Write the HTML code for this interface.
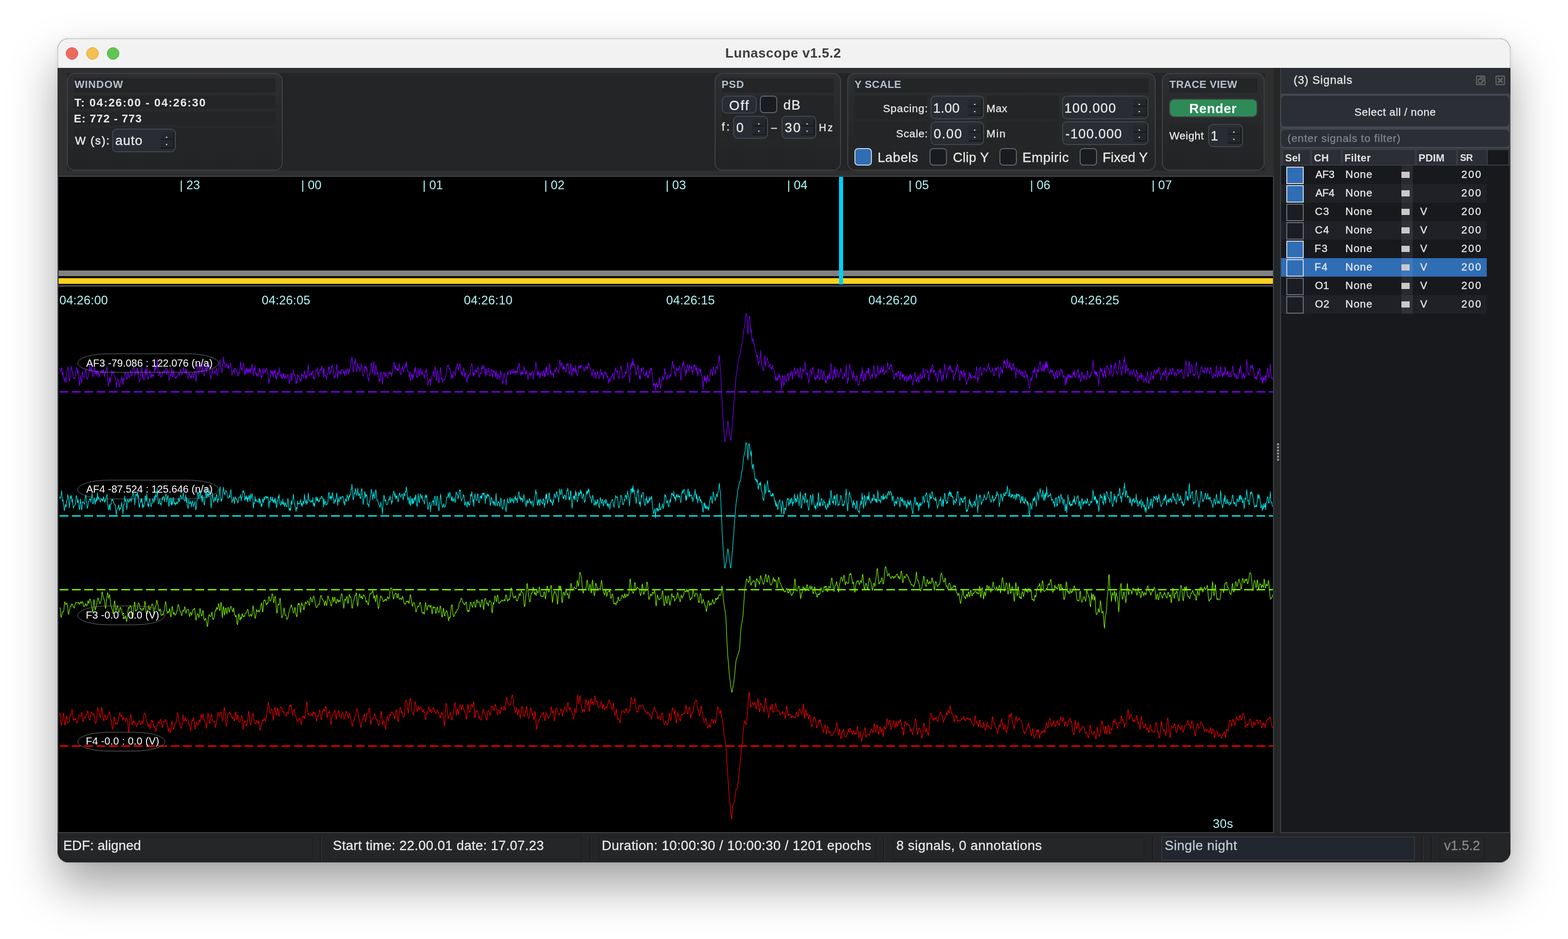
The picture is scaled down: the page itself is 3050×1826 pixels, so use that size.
<!DOCTYPE html>
<html lang="en"><head><meta charset="utf-8"><title>Lunascope v1.5.2</title>
<style>
*{box-sizing:border-box;margin:0;padding:0}
html,body{width:3050px;height:1826px;background:#fff}
body{font-family:"Liberation Sans",sans-serif;position:relative}
#win{position:absolute;left:112px;top:75px;width:2826px;height:1602px;border-radius:21px;overflow:hidden;background:#242527;z-index:2}
#shadow{position:absolute;left:112px;top:75px;width:2826px;height:1602px;border-radius:21px;z-index:1;
 box-shadow:0 45px 90px rgba(0,0,0,.37),0 0 6px rgba(0,0,0,.10)}
#ring{position:absolute;left:112px;top:75px;width:2826px;height:1602px;border-radius:21px;z-index:3;border:1px solid rgba(0,0,0,.22)}
#in{position:absolute;left:-112px;top:-75px;width:3050px;height:1826px;will-change:transform}
.a{position:absolute}
.t{position:absolute;white-space:pre;line-height:1em;-webkit-text-stroke:.3px}
.t.p{-webkit-text-stroke:0}
.gb{border:2px solid #3e4043;border-radius:15px;background:linear-gradient(#2d2e30,#222325)}
.sp{border:2px solid #40454d;border-radius:9px;background:#292c32}
.cb{border:2px solid #5b616b;border-radius:7px;background:#191b20}
.cb.on{background:#2f6db5;border-color:#c3cedd}
.sb{position:absolute;right:1px;top:5px;bottom:5px;width:27px}
.sb i{position:absolute;left:0;right:0;background:#24272c;border-right:2px solid #17181b;border-bottom:2px solid #17181b}
.sb i.u{top:0;height:47%}
.sb i.d{bottom:0;height:50%}
.sb b{position:absolute;left:10px;width:0;height:0;border-left:2.5px solid transparent;border-right:2.5px solid transparent}
.sb b.u{top:24%;border-bottom:3px solid #d8dade}
.sb b.d{bottom:20%;border-top:3px solid #d8dade}
.row{background:#1f2125}
</style></head>
<body>
<div id="shadow"></div>
<div id="win"><div id="in">
<div class="a" style="left:112px;top:75px;width:2826px;height:57px;background:#f2f2f2;"></div>
<div class="a" style="left:128px;top:92px;width:24px;height:24px;border-radius:50%;background:#ed6a5e;border:1px solid #d5544a"></div>
<div class="a" style="left:168px;top:92px;width:24px;height:24px;border-radius:50%;background:#f5bf4f;border:1px solid #d8a13a"></div>
<div class="a" style="left:208px;top:92px;width:24px;height:24px;border-radius:50%;background:#61c554;border:1px solid #4fa73f"></div>
<span class="t" style="left:1410.8px;top:90.4px;font-size:26px;color:#3c3c3c;font-weight:bold;-webkit-text-stroke:0;letter-spacing:0.55px;">Lunascope v1.5.2</span>
<div class="a" style="left:112px;top:132px;width:2366px;height:209px;background:#2f2f2f;"></div>
<div class="a" style="left:130px;top:142px;width:2330px;height:190px;background:#242527;"></div>
<div class="a gb" style="left:130px;top:142px;width:420px;height:190px;"></div>
<div class="a" style="left:144px;top:152px;width:392px;height:28px;background:#242527;"></div>
<span class="t" style="left:144.9px;top:154.0px;font-size:20.5px;color:#b5c0cc;font-weight:bold;-webkit-text-stroke:0;letter-spacing:0.84px;">WINDOW</span>
<div class="a" style="left:144px;top:186px;width:392px;height:25px;background:#242527;"></div>
<span class="t" style="left:144.7px;top:188.6px;font-size:22px;color:#e9e9e9;font-weight:bold;-webkit-text-stroke:0;letter-spacing:1.66px;">T: 04:26:00 - 04:26:30</span>
<div class="a" style="left:144px;top:217px;width:392px;height:26px;background:#242527;"></div>
<span class="t" style="left:143.4px;top:220.3px;font-size:22px;color:#e9e9e9;font-weight:bold;-webkit-text-stroke:0;letter-spacing:1.01px;">E: 772 - 773</span>
<div class="a" style="left:144px;top:249px;width:392px;height:47px;background:#242527;"></div>
<span class="t" style="left:145.9px;top:262.8px;font-size:22px;color:#e9e9e9;letter-spacing:1.66px;-webkit-text-stroke:0.5px #e9e9e9;">W (s):</span>
<div class="a sp" style="left:218px;top:250px;width:124px;height:46px"><div class="sb"><i class="u"></i><i class="d"></i><b class="u"></b><b class="d"></b></div></div>
<span class="t" style="left:223.9px;top:260.4px;font-size:26px;color:#e9e9e9;letter-spacing:0.84px;">auto</span>
<div class="a gb" style="left:1390px;top:142px;width:246px;height:190px;"></div>
<div class="a" style="left:1404px;top:152px;width:218px;height:28px;background:#242527;"></div>
<span class="t" style="left:1403.4px;top:154.0px;font-size:20.5px;color:#b5c0cc;font-weight:bold;-webkit-text-stroke:0;letter-spacing:0.80px;">PSD</span>
<div class="a" style="left:1404px;top:186px;width:218px;height:84px;background:#242527;"></div>
<div class="a sp" style="left:1404px;top:186px;width:68px;height:35px;"></div>
<span class="t" style="left:1418.2px;top:192.0px;font-size:26px;color:#e9e9e9;letter-spacing:2.00px;">Off</span>
<div class="a cb" style="left:1478px;top:186px;width:34px;height:34px;"></div>
<span class="t" style="left:1523.7px;top:191.0px;font-size:26px;color:#e9e9e9;letter-spacing:1.40px;">dB</span>
<span class="t" style="left:1403.8px;top:235.9px;font-size:22px;color:#e9e9e9;letter-spacing:3.00px;">f:</span>
<div class="a sp" style="left:1426px;top:224.5px;width:68px;height:45.5px"><div class="sb"><i class="u"></i><i class="d"></i><b class="u"></b><b class="d"></b></div></div>
<span class="t" style="left:1432.0px;top:235.0px;font-size:26px;color:#e9e9e9;">0</span>
<span class="t" style="left:1500.0px;top:237.6px;font-size:20px;color:#e9e9e9;">–</span>
<div class="a sp" style="left:1520px;top:224.5px;width:68px;height:45.5px"><div class="sb"><i class="u"></i><i class="d"></i><b class="u"></b><b class="d"></b></div></div>
<span class="t" style="left:1526.3px;top:235.0px;font-size:26px;color:#e9e9e9;letter-spacing:2.10px;">30</span>
<span class="t" style="left:1592.8px;top:237.6px;font-size:20px;color:#e9e9e9;letter-spacing:2.72px;">Hz</span>
<div class="a gb" style="left:1648px;top:142px;width:600px;height:190px;"></div>
<div class="a" style="left:1662px;top:152px;width:572px;height:28px;background:#242527;"></div>
<span class="t" style="left:1662.2px;top:154.0px;font-size:20.5px;color:#b5c0cc;font-weight:bold;-webkit-text-stroke:0;letter-spacing:0.39px;">Y SCALE</span>
<div class="a" style="left:1662px;top:186px;width:142px;height:46px;background:#242527;"></div>
<div class="a" style="left:1920px;top:186px;width:140px;height:46px;background:#242527;"></div>
<div class="a" style="left:1662px;top:236px;width:142px;height:46px;background:#242527;"></div>
<div class="a" style="left:1920px;top:236px;width:140px;height:46px;background:#242527;"></div>
<span class="t" style="left:1717.4px;top:199.7px;font-size:21px;color:#e9e9e9;letter-spacing:0.79px;">Spacing:</span>
<div class="a sp" style="left:1810px;top:186px;width:104px;height:46px"><div class="sb"><i class="u"></i><i class="d"></i><b class="u"></b><b class="d"></b></div></div>
<span class="t" style="left:1815.0px;top:197.0px;font-size:26px;color:#e9e9e9;letter-spacing:0.26px;">1.00</span>
<span class="t" style="left:1918.8px;top:199.7px;font-size:21px;color:#e9e9e9;letter-spacing:0.39px;">Max</span>
<div class="a sp" style="left:2066px;top:186px;width:168px;height:46px"><div class="sb"><i class="u"></i><i class="d"></i><b class="u"></b><b class="d"></b></div></div>
<span class="t" style="left:2070.3px;top:197.0px;font-size:26px;color:#e9e9e9;letter-spacing:1.02px;">100.000</span>
<span class="t" style="left:1743.0px;top:249.4px;font-size:21px;color:#e9e9e9;letter-spacing:0.66px;">Scale:</span>
<div class="a sp" style="left:1810px;top:236px;width:104px;height:46px"><div class="sb"><i class="u"></i><i class="d"></i><b class="u"></b><b class="d"></b></div></div>
<span class="t" style="left:1816.0px;top:247.2px;font-size:26px;color:#e9e9e9;letter-spacing:1.46px;">0.00</span>
<span class="t" style="left:1918.8px;top:249.4px;font-size:21px;color:#e9e9e9;letter-spacing:1.53px;">Min</span>
<div class="a sp" style="left:2066px;top:236px;width:168px;height:46px"><div class="sb"><i class="u"></i><i class="d"></i><b class="u"></b><b class="d"></b></div></div>
<span class="t" style="left:2072.3px;top:247.2px;font-size:26px;color:#e9e9e9;letter-spacing:1.00px;">-100.000</span>
<div class="a" style="left:1662px;top:288px;width:128px;height:34px;background:#242527;"></div>
<div class="a" style="left:1808px;top:288px;width:120px;height:34px;background:#242527;"></div>
<div class="a" style="left:1944px;top:288px;width:140px;height:34px;background:#242527;"></div>
<div class="a" style="left:2100px;top:288px;width:134px;height:34px;background:#242527;"></div>
<div class="a cb on" style="left:1662px;top:288px;width:34px;height:34px;"></div>
<span class="t" style="left:1706.9px;top:293.1px;font-size:26px;color:#e9e9e9;letter-spacing:0.47px;">Labels</span>
<div class="a cb" style="left:1808px;top:288px;width:34px;height:34px;"></div>
<span class="t" style="left:1853.5px;top:293.1px;font-size:26px;color:#e9e9e9;letter-spacing:0.26px;">Clip Y</span>
<div class="a cb" style="left:1944px;top:288px;width:34px;height:34px;"></div>
<span class="t" style="left:1988.7px;top:293.1px;font-size:26px;color:#e9e9e9;letter-spacing:0.60px;">Empiric</span>
<div class="a cb" style="left:2100px;top:288px;width:34px;height:34px;"></div>
<span class="t" style="left:2144.7px;top:293.1px;font-size:26px;color:#e9e9e9;letter-spacing:0.03px;">Fixed Y</span>
<div class="a gb" style="left:2260px;top:142px;width:200px;height:190px;"></div>
<div class="a" style="left:2274px;top:152px;width:172px;height:28px;background:#242527;"></div>
<span class="t" style="left:2274.8px;top:154.0px;font-size:20.5px;color:#b5c0cc;font-weight:bold;-webkit-text-stroke:0;letter-spacing:0.32px;">TRACE VIEW</span>
<div class="a" style="left:2274px;top:192px;width:172px;height:36px;background:#2e8b57;border:2px solid #3f4a4a;border-radius:10px;"></div>
<span class="t" style="left:2313.2px;top:197.5px;font-size:26px;color:#ffffff;font-weight:bold;-webkit-text-stroke:0;letter-spacing:0.50px;">Render</span>
<div class="a" style="left:2274px;top:240px;width:172px;height:46px;background:#242527;"></div>
<span class="t" style="left:2274.4px;top:252.8px;font-size:21px;color:#e9e9e9;letter-spacing:0.41px;">Weight</span>
<div class="a sp" style="left:2350px;top:240.5px;width:68px;height:45.5px"><div class="sb"><i class="u"></i><i class="d"></i><b class="u"></b><b class="d"></b></div></div>
<span class="t" style="left:2355.0px;top:251.3px;font-size:26px;color:#e9e9e9;">1</span>
<div class="a" style="left:112px;top:339.5px;width:2366px;height:1.7px;background:#232426;"></div>
<div class="a" style="left:112px;top:341.2px;width:2366px;height:2.8px;background:#3a3e45;"></div>
<div class="a" style="left:112px;top:344px;width:2px;height:1276px;background:#3a3e45;"></div>
<div class="a" style="left:2476px;top:344px;width:2px;height:1276px;background:#3a3e45;"></div>
<div class="a" style="left:114px;top:344px;width:2362px;height:210px;background:#000;"></div>
<span class="t p" style="left:349.5px;top:348.4px;font-size:24px;color:#aef6f6;">| 23</span>
<span class="t p" style="left:585.8px;top:348.4px;font-size:24px;color:#aef6f6;">| 00</span>
<span class="t p" style="left:822.1px;top:348.4px;font-size:24px;color:#aef6f6;">| 01</span>
<span class="t p" style="left:1058.4px;top:348.4px;font-size:24px;color:#aef6f6;">| 02</span>
<span class="t p" style="left:1294.7px;top:348.4px;font-size:24px;color:#aef6f6;">| 03</span>
<span class="t p" style="left:1531.0px;top:348.4px;font-size:24px;color:#aef6f6;">| 04</span>
<span class="t p" style="left:1767.3px;top:348.4px;font-size:24px;color:#aef6f6;">| 05</span>
<span class="t p" style="left:2003.6px;top:348.4px;font-size:24px;color:#aef6f6;">| 06</span>
<span class="t p" style="left:2239.9px;top:348.4px;font-size:24px;color:#aef6f6;">| 07</span>
<div class="a" style="left:114px;top:526px;width:2362px;height:11px;background:#808080;"></div>
<div class="a" style="left:114px;top:541px;width:2362px;height:11px;background:#ffd01e;"></div>
<div class="a" style="left:1632px;top:344px;width:8px;height:209px;background:#00d0f5;"></div>
<div class="a" style="left:114px;top:554px;width:2362px;height:4px;background:#3a3e45;"></div>
<div class="a" style="left:114px;top:558px;width:2362px;height:1059.5px;background:#000;"></div>
<div class="a" style="left:112px;top:1617.5px;width:2826px;height:2.5px;background:#3a3e45;"></div>
<span class="t p" style="left:115.5px;top:572.1px;font-size:24px;color:#aef6f6;letter-spacing:0.15px;">04:26:00</span>
<span class="t p" style="left:508.9px;top:572.1px;font-size:24px;color:#aef6f6;letter-spacing:0.17px;">04:26:05</span>
<span class="t p" style="left:902.3px;top:572.1px;font-size:24px;color:#aef6f6;letter-spacing:0.15px;">04:26:10</span>
<span class="t p" style="left:1295.7px;top:572.1px;font-size:24px;color:#aef6f6;letter-spacing:0.17px;">04:26:15</span>
<span class="t p" style="left:1689.1px;top:572.1px;font-size:24px;color:#aef6f6;letter-spacing:0.15px;">04:26:20</span>
<span class="t p" style="left:2082.5px;top:572.1px;font-size:24px;color:#aef6f6;letter-spacing:0.17px;">04:26:25</span>
<span class="t p" style="left:2358.9px;top:1589.5px;font-size:24px;color:#aef6f6;letter-spacing:0.45px;">30s</span>
<svg class="a" style="left:0;top:0" width="3050" height="1826" viewBox="0 0 3050 1826"><path transform="translate(116,0) scale(0.75,0.5)" d="M0,1432 l1,3 1,8 1,1 1,-5 1,-10 1,8 1,22 1,-3 1,-10 1,21 1,5 1,14 1,-12 1,-2 1,-4 1,19 1,1 1,-33 1,-13 1,1 1,-13 1,-3 1,3 1,26 1,26 1,-1 1,-10 1,-33 1,0 1,-14 1,5 1,19 1,-4 1,14 1,8 1,6 1,-3 1,4 1,0 1,-5 1,-12 1,-11 1,-13 1,-3 1,4 1,16 1,3 1,-16 1,18 1,25 1,21 1,-5 1,-22 1,-13 1,14 1,2 1,14 1,-13 1,-34 1,10 1,7 1,6 1,2 1,-3 1,-1 1,-17 1,-3 1,-9 1,14 1,12 1,14 1,0 1,-5 1,-2 1,-7 1,-15 1,-16 1,-10 1,20 1,5 1,-5 1,-15 1,17 1,-5 1,13 1,16 1,-3 1,-5 1,-19 1,-12 1,7 1,25 1,-8 1,-10 1,12 1,-10 1,20 1,-22 1,10 1,4 1,-6 1,18 1,-3 1,-12 1,-1 1,0 1,-8 1,-4 1,2 1,11 1,-10 1,10 1,-12 1,-3 1,16 1,13 1,-7 1,-14 1,6 1,-10 1,0 1,-3 1,-14 1,33 1,19 1,25 1,0 1,-16 1,-18 1,14 1,8 1,-18 1,4 1,-16 1,-19 1,9 1,5 1,-2 1,-4 1,-4 1,8 1,10 1,7 1,-2 1,1 1,20 1,20 1,-14 1,-8 1,-10 1,-3 1,7 1,2 1,11 1,12 1,-3 1,-14 1,-3 1,-3 1,-10 1,-8 1,18 1,-8 1,22 1,-8 1,-18 1,9 1,-12 1,-17 1,5 1,-4 1,-2 1,16 1,9 1,1 1,-16 1,-11 1,10 1,2 1,11 1,-9 1,1 1,0 1,-19 1,-5 1,15 1,9 1,-2 1,-11 1,-18 1,-4 1,-2 1,12 1,-3 1,28 1,-8 1,-10 1,5 1,0 1,3 1,-19 1,-3 1,26 1,-16 1,30 1,10 1,6 1,-10 1,-5 1,-10 1,-18 1,2 1,-17 1,13 1,28 1,-17 1,13 1,12 1,-2 1,0 1,-21 1,-20 1,4 1,20 1,-4 1,-29 1,24 1,10 1,15 1,-3 1,0 1,-18 1,-5 1,-8 1,6 1,18 1,5 1,-12 1,-5 1,13 1,-8 1,-1 1,5 1,3 1,-11 1,-28 1,16 1,-7 1,-10 1,9 1,-1 1,-7 1,-30 1,23 1,26 1,15 1,3 1,-1 1,-8 1,-15 1,16 1,6 1,7 1,-7 1,2 1,-17 1,8 1,-2 1,-3 1,-7 1,-2 1,10 1,-2 1,-6 1,-8 1,-2 1,3 1,22 1,-8 1,-4 1,-8 1,9 1,24 1,10 1,-8 1,-5 1,-14 1,9 1,-3 1,0 1,-30 1,30 1,8 1,0 1,-25 1,-3 1,21 1,1 1,5 1,5 1,-4 1,6 1,-6 1,-5 1,3 1,-8 1,-2 1,-4 1,1 1,11 1,-7 1,-6 1,-11 1,-3 1,6 1,12 1,5 1,-7 1,-10 1,0 1,-15 1,14 1,4 1,5 1,1 1,-9 1,-8 1,14 1,6 1,-18 1,28 1,2 1,8 1,-9 1,-17 1,10 1,-2 1,0 1,14 1,-7 1,-2 1,12 1,-17 1,-2 1,-3 1,7 1,12 1,-5 1,-10 1,-3 1,-9 1,11 1,24 1,5 1,-22 1,-22 1,-6 1,-17 1,14 1,0 1,28 1,-12 1,-14 1,-12 1,-13 1,25 1,13 1,-4 1,10 1,-7 1,-24 1,15 1,15 1,8 1,4 1,-4 1,-26 1,2 1,2 1,-9 1,21 1,-10 1,-14 1,10 1,-10 1,7 1,-15 1,9 1,-2 1,28 1,11 1,10 1,2 1,-15 1,-13 1,-12 1,17 1,-1 1,1 1,4 1,-7 1,-2 1,-2 1,9 1,-6 1,-16 1,6 1,13 1,7 1,4 1,-14 1,-9 1,-8 1,-16 1,-4 1,-11 1,26 1,-2 1,11 1,-2 1,19 1,-12 1,-20 1,-12 1,-19 1,18 1,9 1,-6 1,19 1,-2 1,-6 1,1 1,-8 1,6 1,8 1,5 1,-9 1,-3 1,15 1,-9 1,0 1,-2 1,-13 1,8 1,11 1,14 1,16 1,-4 1,-11 1,1 1,-9 1,9 1,7 1,-18 1,-4 1,4 1,9 1,-2 1,-3 1,10 1,-1 1,14 1,0 1,-14 1,2 1,3 1,-11 1,-16 1,-19 1,12 1,19 1,-8 1,10 1,-9 1,-12 1,-1 1,-8 1,22 1,3 1,24 1,-4 1,-21 1,15 1,4 1,-22 1,12 1,-6 1,16 1,-16 1,11 1,-12 1,0 1,13 1,3 1,-20 1,13 1,-7 1,-17 1,-4 1,16 1,9 1,21 1,-9 1,-21 1,8 1,-6 1,-13 1,31 1,-3 1,0 1,14 1,-10 1,-1 1,12 1,-7 1,-9 1,-14 1,-3 1,16 1,-12 1,17 1,6 1,14 1,-12 1,5 1,-27 1,-5 1,0 1,22 1,-11 1,3 1,-12 1,2 1,9 1,-7 1,-2 1,-7 1,6 1,7 1,8 1,6 1,13 1,22 1,-22 1,-1 1,-2 1,-30 1,8 1,5 1,-5 1,9 1,-15 1,19 1,7 1,-17 1,-5 1,9 1,-14 1,-1 1,32 1,-10 1,16 1,-3 1,-14 1,-7 1,6 1,-10 1,7 1,-25 1,10 1,6 1,13 1,3 1,4 1,-12 1,18 1,-1 1,0 1,-17 1,14 1,-13 1,-3 1,16 1,4 1,-10 1,-2 1,10 1,0 1,-2 1,1 1,-12 1,-1 1,5 1,10 1,20 1,0 1,-13 1,2 1,0 1,-28 1,2 1,27 1,-9 1,-20 1,-3 1,-11 1,10 1,11 1,-2 1,1 1,10 1,8 1,17 1,-12 1,2 1,7 1,-35 1,6 1,3 1,1 1,-3 1,11 1,5 1,3 1,-6 1,8 1,-5 1,-26 1,11 1,-5 1,0 1,3 1,9 1,-13 1,-16 1,12 1,4 1,17 1,-1 1,-15 1,13 1,-9 1,-8 1,-28 1,-7 1,29 1,15 1,-5 1,-3 1,1 1,2 1,-12 1,9 1,3 1,-7 1,-5 1,-5 1,32 1,-8 1,7 1,3 1,-10 1,-6 1,-9 1,-11 1,2 1,0 1,-12 1,23 1,-5 1,12 1,7 1,-17 1,-1 1,-10 1,-2 1,-3 1,8 1,-6 1,-12 1,11 1,-1 1,1 1,35 1,-29 1,-8 1,24 1,8 1,-6 1,5 1,3 1,12 1,-14 1,-11 1,2 1,-3 1,-25 1,7 1,-7 1,28 1,-1 1,-7 1,-5 1,5 1,-22 1,5 1,-11 1,6 1,3 1,13 1,20 1,9 1,0 1,-9 1,6 1,-16 1,-8 1,-22 1,-4 1,28 1,26 1,-15 1,-14 1,8 1,2 1,1 1,-11 1,4 1,11 1,-6 1,-15 1,0 1,2 1,0 1,5 1,-2 1,11 1,-7 1,12 1,5 1,-18 1,-5 1,10 1,9 1,-18 1,-6 1,5 1,2 1,15 1,-11 1,-7 1,8 1,-15 1,-2 1,-3 1,-26 1,0 1,-13 1,15 1,15 1,29 1,2 1,-14 1,-17 1,-9 1,6 1,-20 1,14 1,18 1,20 1,-6 1,-3 1,-25 1,12 1,7 1,1 1,-4 1,5 1,13 1,-10 1,-1 1,-22 1,11 1,0 1,19 1,16 1,5 1,-5 1,-5 1,-4 1,-21 1,-6 1,12 1,-10 1,2 1,13 1,-10 1,39 1,2 1,1 1,0 1,12 1,-22 1,-9 1,4 1,-20 1,-7 1,-20 1,6 1,12 1,4 1,22 1,-22 1,-4 1,-23 1,30 1,16 1,9 1,-18 1,-22 1,1 1,19 1,18 1,-8 1,-3 1,9 1,17 1,6 1,-4 1,11 1,-10 1,-15 1,-15 1,11 1,13 1,5 1,21 1,-14 1,-25 1,-2 1,-9 1,2 1,11 1,8 1,-16 1,-2 1,13 1,-2 1,8 1,1 1,0 1,-12 1,-5 1,-4 1,6 1,-5 1,-5 1,11 1,-2 1,-3 1,15 1,-13 1,0 1,-19 1,-3 1,-16 1,-1 1,-4 1,29 1,-15 1,-1 1,12 1,-1 1,6 1,-8 1,9 1,-6 1,8 1,-5 1,-19 1,-4 1,15 1,25 1,3 1,1 1,-13 1,-11 1,2 1,-7 1,-5 1,19 1,2 1,-10 1,0 1,-6 1,-10 1,-3 1,12 1,-21 1,6 1,12 1,17 1,3 1,-2 1,3 1,14 1,8 1,-11 1,-12 1,37 1,-9 1,-5 1,-13 1,3 1,20 1,-21 1,10 1,-3 1,-8 1,-7 1,-15 1,13 1,-20 1,7 1,18 1,16 1,-5 1,5 1,-19 1,-16 1,15 1,10 1,3 1,-19 1,-9 1,4 1,12 1,7 1,-4 1,-15 1,18 1,2 1,-1 1,-1 1,6 1,12 1,-14 1,-10 1,-6 1,7 1,-10 1,-6 1,30 1,13 1,23 1,-11 1,-6 1,-7 1,-1 1,6 1,-9 1,27 1,-19 1,-1 1,-6 1,-11 1,-4 1,-7 1,-5 1,0 1,21 1,-29 1,-2 1,-11 1,13 1,28 1,15 1,-18 1,-19 1,-2 1,3 1,22 1,21 1,1 1,-20 1,-15 1,-16 1,-9 1,26 1,18 1,2 1,-5 1,18 1,-8 1,-2 1,-3 1,4 1,0 1,-4 1,-7 1,-5 1,-2 1,-14 1,-16 1,-5 1,-5 1,3 1,-6 1,11 1,5 1,1 1,-4 1,5 1,10 1,13 1,16 1,-7 1,-15 1,17 1,-5 1,-6 1,-8 1,-9 1,6 1,5 1,8 1,-7 1,-25 1,6 1,-11 1,-6 1,-5 1,22 1,4 1,-3 1,-8 1,-12 1,5 1,-5 1,11 1,25 1,1 1,-8 1,16 1,1 1,-13 1,-17 1,0 1,-2 1,38 1,-6 1,-13 1,2 1,10 1,18 1,4 1,4 1,-23 1,8 1,-14 1,3 1,0 1,-5 1,2 1,-9 1,-23 1,-2 1,-3 1,-8 1,11 1,8 1,28 1,-12 1,17 1,-15 1,6 1,-19 1,2 1,7 1,-4 1,-1 1,8 1,-10 1,-6 1,-8 1,14 1,16 1,11 1,2 1,-12 1,-6 1,3 1,0 1,-22 1,5 1,-17 1,14 1,1 1,-2 1,-11 1,4 1,20 1,4 1,16 1,-29 1,-3 1,15 1,10 1,-15 1,-1 1,-5 1,-6 1,15 1,-3 1,15 1,4 1,1 1,-8 1,-17 1,0 1,-2 1,24 1,7 1,-11 1,-15 1,6 1,-6 1,7 1,1 1,17 1,-7 1,-19 1,17 1,17 1,0 1,-21 1,3 1,5 1,5 1,-4 1,3 1,12 1,-18 1,-18 1,6 1,8 1,9 1,15 1,14 1,-1 1,-12 1,-24 1,-4 1,5 1,13 1,2 1,14 1,11 1,-12 1,-23 1,-6 1,-9 1,13 1,-12 1,-3 1,0 1,-1 1,-1 1,15 1,-7 1,-12 1,3 1,8 1,3 1,-6 1,-12 1,15 1,1 1,-4 1,-6 1,7 1,-5 1,15 1,-16 1,4 1,0 1,6 1,-25 1,7 1,-8 1,-11 1,-3 1,27 1,0 1,10 1,12 1,-15 1,6 1,4 1,-13 1,11 1,1 1,-17 1,-14 1,11 1,-2 1,15 1,9 1,-8 1,5 1,-14 1,16 1,0 1,16 1,4 1,-12 1,-8 1,-3 1,-3 1,12 1,-5 1,-7 1,11 1,-12 1,-2 1,-3 1,8 1,24 1,-4 1,-18 1,-12 1,0 1,-4 1,-9 1,-22 1,13 1,1 1,26 1,11 1,1 1,-16 1,16 1,-10 1,0 1,20 1,0 1,-17 1,7 1,-10 1,-2 1,1 1,13 1,1 1,-22 1,3 1,4 1,18 1,-14 1,14 1,-15 1,-21 1,21 1,-24 1,6 1,21 1,7 1,-2 1,-3 1,-25 1,-16 1,9 1,24 1,7 1,-13 1,12 1,6 1,-6 1,2 1,1 1,-7 1,20 1,-13 1,-10 1,-8 1,5 1,3 1,-5 1,-14 1,7 1,3 1,3 1,0 1,3 1,9 1,-11 1,-12 1,-29 1,6 1,10 1,11 1,-7 1,-11 1,8 1,5 1,16 1,-2 1,-14 1,15 1,-10 1,6 1,6 1,2 1,8 1,-18 1,-14 1,0 1,5 1,-11 1,3 1,19 1,18 1,-5 1,12 1,-16 1,-24 1,-4 1,32 1,12 1,5 1,-22 1,-7 1,12 1,-17 1,10 1,0 1,6 1,-6 1,-19 1,28 1,-10 1,18 1,2 1,4 1,-10 1,-15 1,-15 1,11 1,-7 1,-1 1,10 1,-14 1,6 1,-7 1,4 1,2 1,1 1,1 1,3 1,1 1,12 1,0 1,-11 1,2 1,-8 1,-2 1,7 1,-3 1,10 1,-17 1,9 1,-20 1,6 1,-3 1,12 1,3 1,7 1,-1 1,8 1,1 1,17 1,3 1,-15 1,-12 1,0 1,12 1,21 1,-12 1,-1 1,-10 1,12 1,14 1,-10 1,-8 1,-1 1,-10 1,5 1,9 1,12 1,1 1,2 1,-19 1,-17 1,1 1,6 1,12 1,4 1,-13 1,8 1,3 1,16 1,-6 1,-18 1,-2 1,-1 1,4 1,7 1,-10 1,6 1,0 1,14 1,-6 1,8 1,22 1,-8 1,-7 1,-6 1,15 1,-6 1,-8 1,-7 1,1 1,-1 1,0 1,-11 1,-3 1,7 1,14 1,7 1,-30 1,-7 1,-3 1,-9 1,14 1,4 1,-1 1,-8 1,6 1,12 1,8 1,3 1,6 1,-9 1,-14 1,-8 1,-20 1,1 1,10 1,12 1,8 1,19 1,-4 1,-3 1,-3 1,-1 1,-1 1,3 1,-20 1,10 1,-9 1,5 1,-8 1,-20 1,-12 1,9 1,12 1,19 1,18 1,20 1,-11 1,-25 1,-31 1,9 1,-18 1,11 1,-15 1,12 1,-27 1,19 1,11 1,-8 1,5 1,7 1,15 1,3 1,15 1,-5 1,-11 1,-11 1,2 1,-15 1,5 1,11 1,28 1,9 1,-13 1,16 1,-26 1,-13 1,-6 1,14 1,-8 1,-2 1,-3 1,-3 1,20 1,15 1,-6 1,2 1,0 1,-10 1,11 1,-21 1,9 1,19 1,-6 1,-1 1,9 1,-9 1,-21 1,11 1,-1 1,-7 1,-11 1,8 1,-8 1,12 1,19 1,3 1,17 1,19 1,-10 1,2 1,4 1,-7 1,28 1,-24 1,3 1,-10 1,4 1,15 1,-12 1,9 1,-7 1,-2 1,-24 1,-3 1,26 1,3 1,15 1,-13 1,-9 1,-8 1,-11 1,-8 1,12 1,-4 1,6 1,-14 1,-29 1,-1 1,22 1,-8 1,14 1,7 1,8 1,-10 1,-7 1,1 1,8 1,3 1,-3 1,0 1,-12 1,9 1,-6 1,-5 1,-24 1,-4 1,-18 1,-3 1,12 1,15 1,-13 1,27 1,7 1,-3 1,8 1,7 1,-24 1,-10 1,9 1,1 1,-3 1,-5 1,7 1,-6 1,-10 1,1 1,0 1,41 1,12 1,-1 1,-29 1,-18 1,-5 1,-13 1,10 1,-18 1,8 1,7 1,7 1,13 1,11 1,13 1,-26 1,12 1,-16 1,-16 1,10 1,0 1,11 1,7 1,-25 1,8 1,1 1,-1 1,7 1,-7 1,-2 1,18 1,-5 1,18 1,-14 1,-18 1,-4 1,-3 1,10 1,-8 1,17 1,-1 1,4 1,-15 1,25 1,-9 1,22 1,-9 1,-11 1,-9 1,0 1,4 1,12 1,-11 1,-2 1,20 1,1 1,8 1,4 1,31 1,13 1,-29 1,-17 1,-8 1,22 1,-13 1,11 1,-5 1,-7 1,23 1,-8 1,-12 1,-12 1,17 1,3 1,6 1,-8 1,-13 1,-12 1,4 1,-20 1,2 1,2 1,10 1,13 1,-16 1,-21 1,1 1,8 1,6 1,1 1,15 1,-9 1,-11 1,-12 1,4 1,1 1,5 1,-17 1,-3 1,-11 1,-11 1,-12 1,26 1,16 1,13 1,30 1,39 1,28 1,28 1,36 1,26 1,19 1,21 1,17 1,21 1,17 1,-2 1,-10 1,-11 1,-6 1,-11 1,-13 1,-13 1,-15 1,7 1,14 1,16 1,11 1,4 1,12 1,12 1,-3 1,-12 1,-17 1,-22 1,-18 1,-19 1,-20 1,-18 1,-21 1,-22 1,-16 1,-15 1,-23 1,-17 1,-13 1,-11 1,-8 1,-12 1,-12 1,-7 1,-7 1,-9 1,-9 1,-1 1,-1 1,-8 1,-11 1,-11 1,-12 1,-3 1,-7 1,-10 1,-17 1,-16 1,-7 1,-3 1,-11 1,-15 1,-21 1,-6 1,-3 1,4 1,15 1,46 1,16 1,-27 1,-31 1,-11 1,-2 1,7 1,22 1,6 1,30 1,-11 1,38 1,5 1,2 1,-13 1,10 1,10 1,-1 1,15 1,3 1,8 1,9 1,3 1,3 1,14 1,-8 1,1 1,23 1,15 1,-12 1,-1 1,3 1,-18 1,-4 1,-25 1,16 1,33 1,10 1,5 1,4 1,5 1,2 1,5 1,-18 1,-33 1,-8 1,23 1,18 1,-15 1,-2 1,-9 1,-1 1,-6 1,11 1,21 1,0 1,-2 1,2 1,-10 1,13 1,4 1,3 1,-5 1,8 1,-15 1,4 1,-3 1,13 1,-1 1,4 1,14 1,4 1,0 1,24 1,-16 1,12 1,2 1,-12 1,13 1,-3 1,-10 1,-14 1,17 1,-4 1,-6 1,6 1,8 1,8 1,35 1,-22 1,-34 1,3 1,-3 1,20 1,21 1,-8 1,-33 1,1 1,3 1,16 1,4 1,0 1,-11 1,-16 1,-4 1,3 1,-4 1,28 1,-16 1,-2 1,-8 1,-7 1,12 1,-1 1,-11 1,-6 1,9 1,26 1,-21 1,-9 1,-6 1,-5 1,-6 1,9 1,19 1,-13 1,3 1,4 1,2 1,-3 1,-19 1,11 1,6 1,16 1,4 1,-23 1,-11 1,-7 1,13 1,25 1,4 1,3 1,-22 1,-11 1,-4 1,10 1,-7 1,0 1,3 1,-35 1,14 1,1 1,28 1,6 1,3 1,-5 1,-6 1,26 1,5 1,11 1,-11 1,-3 1,-21 1,-17 1,2 1,4 1,0 1,19 1,-23 1,-12 1,3 1,5 1,11 1,10 1,14 1,3 1,-5 1,11 1,-12 1,1 1,1 1,-11 1,12 1,-34 1,-2 1,11 1,26 1,6 1,-9 1,4 1,-28 1,-8 1,3 1,1 1,19 1,18 1,-6 1,-15 1,-17 1,16 1,5 1,3 1,22 1,-6 1,11 1,-7 1,-3 1,-14 1,-8 1,17 1,-9 1,-6 1,-12 1,26 1,-2 1,-22 1,-30 1,-8 1,30 1,13 1,16 1,7 1,-13 1,2 1,-31 1,17 1,-8 1,-20 1,27 1,19 1,-10 1,-24 1,-1 1,6 1,1 1,19 1,0 1,1 1,3 1,-16 1,-5 1,-7 1,-7 1,13 1,6 1,1 1,13 1,8 1,0 1,-5 1,-3 1,-15 1,9 1,8 1,-16 1,-13 1,-20 1,28 1,24 1,20 1,1 1,-22 1,8 1,-38 1,-6 1,-18 1,14 1,7 1,0 1,8 1,7 1,0 1,12 1,12 1,-23 1,-10 1,26 1,-5 1,0 1,4 1,4 1,11 1,-6 1,-15 1,1 1,11 1,15 1,11 1,1 1,-5 1,1 1,-16 1,-11 1,2 1,-20 1,10 1,8 1,-40 1,23 1,-9 1,27 1,15 1,-5 1,-24 1,-4 1,6 1,21 1,-13 1,-18 1,-7 1,4 1,8 1,-1 1,-21 1,20 1,-19 1,28 1,3 1,11 1,-7 1,-2 1,-1 1,-5 1,-3 1,14 1,-17 1,-3 1,-26 1,-2 1,23 1,11 1,-5 1,11 1,11 1,-17 1,5 1,1 1,-24 1,-17 1,12 1,22 1,3 1,-8 1,-6 1,-5 1,13 1,-6 1,-22 1,12 1,2 1,10 1,-6 1,-19 1,29 1,-1 1,6 1,-9 1,-2 1,-1 1,-3 1,6 1,-3 1,-6 1,-30 1,6 1,9 1,10 1,1 1,4 1,-16 1,-3 1,2 1,-3 1,6 1,-6 1,25 1,-1 1,-3 1,16 1,19 1,-1 1,-6 1,-1 1,-15 1,6 1,-3 1,-6 1,19 1,-14 1,-2 1,-7 1,6 1,-8 1,5 1,4 1,20 1,6 1,-27 1,-8 1,18 1,-2 1,9 1,-16 1,16 1,-9 1,-2 1,13 1,12 1,-18 1,2 1,6 1,0 1,-11 1,25 1,-5 1,-5 1,-9 1,10 1,-2 1,-15 1,10 1,3 1,-17 1,1 1,16 1,-12 1,7 1,10 1,12 1,8 1,-12 1,-9 1,-17 1,-1 1,-11 1,5 1,19 1,10 1,3 1,-12 1,7 1,-11 1,1 1,-10 1,28 1,-2 1,-21 1,-2 1,-11 1,19 1,3 1,-1 1,-10 1,7 1,-1 1,-27 1,-10 1,18 1,4 1,15 1,-8 1,-22 1,-2 1,0 1,2 1,1 1,4 1,5 1,-6 1,19 1,19 1,-7 1,-13 1,-23 1,8 1,3 1,-15 1,12 1,-21 1,-4 1,-4 1,11 1,18 1,4 1,-11 1,1 1,6 1,18 1,-10 1,3 1,-6 1,20 1,6 1,10 1,-18 1,-4 1,-8 1,-19 1,2 1,8 1,3 1,-16 1,22 1,7 1,20 1,-7 1,-19 1,1 1,16 1,-21 1,-18 1,-20 1,7 1,18 1,7 1,0 1,24 1,-5 1,-13 1,1 1,-24 1,-1 1,0 1,10 1,-18 1,10 1,-9 1,17 1,-9 1,15 1,-1 1,-4 1,4 1,-5 1,33 1,6 1,-21 1,0 1,-1 1,-5 1,-8 1,-15 1,15 1,-15 1,-13 1,9 1,-2 1,21 1,5 1,6 1,25 1,0 1,-23 1,-18 1,9 1,6 1,-10 1,15 1,2 1,7 1,-11 1,-17 1,14 1,11 1,-12 1,-1 1,29 1,6 1,10 1,-11 1,-6 1,0 1,-6 1,-7 1,3 1,-22 1,-1 1,21 1,-13 1,16 1,-7 1,8 1,-1 1,0 1,-5 1,-1 1,3 1,-1 1,-6 1,0 1,11 1,0 1,-22 1,-13 1,-12 1,15 1,5 1,46 1,-21 1,3 1,-6 1,-32 1,3 1,-8 1,-2 1,-1 1,26 1,7 1,-7 1,2 1,-5 1,-8 1,-7 1,-4 1,-1 1,9 1,-3 1,1 1,-1 1,7 1,0 1,1 1,-17 1,0 1,1 1,-16 1,12 1,12 1,-5 1,8 1,1 1,6 1,0 1,-1 1,-3 1,-11 1,9 1,3 1,18 1,-3 1,2 1,-5 1,-15 1,-9 1,8 1,-10 1,13 1,-7 1,0 1,-6 1,-3 1,3 1,23 1,21 1,-17 1,-2 1,-12 1,-17 1,8 1,13 1,-6 1,14 1,-16 1,-6 1,-16 1,-16 1,12 1,-9 1,14 1,-7 1,9 1,9 1,5 1,-22 1,-17 1,16 1,13 1,6 1,-2 1,3 1,-24 1,22 1,-3 1,6 1,10 1,-11 1,9 1,-12 1,-5 1,-11 1,9 1,18 1,-9 1,3 1,10 1,10 1,21 1,-26 1,-17 1,14 1,0 1,-2 1,1 1,3 1,6 1,-17 1,8 1,2 1,12 1,-3 1,-11 1,9 1,9 1,4 1,-21 1,6 1,15 1,-1 1,6 1,-8 1,-21 1,4 1,1 1,7 1,8 1,6 1,-11 1,22 1,0 1,17 1,12 1,3 1,-1 1,-20 1,-15 1,-6 1,7 1,7 1,-13 1,-2 1,-19 1,-7 1,7 1,-9 1,11 1,-23 1,18 1,11 1,2 1,13 1,-17 1,-19 1,0 1,13 1,-7 1,5 1,-21 1,-10 1,-1 1,-11 1,16 1,16 1,3 1,-4 1,12 1,-10 1,-19 1,8 1,20 1,1 1,-26 1,2 1,14 1,-30 1,20 1,5 1,-27 1,25 1,-13 1,16 1,8 1,3 1,4 1,6 1,-1 1,-5 1,-12 1,11 1,-5 1,10 1,-13 1,4 1,2 1,17 1,1 1,-7 1,11 1,10 1,-8 1,-18 1,0 1,-11 1,32 1,-8 1,5 1,-24 1,-1 1,2 1,1 1,2 1,16 1,-16 1,-9 1,-3 1,3 1,11 1,-10 1,17 1,2 1,11 1,-9 1,1 1,1 1,14 1,22 1,-8 1,-28 1,9 1,21 1,-24 1,4 1,-17 1,9 1,-8 1,12 1,-3 1,-10 1,14 1,-4 1,-5 1,7 1,-3 1,5 1,-9 1,-11 1,5 1,-10 1,15 1,-21 1,27 1,1 1,1 1,-5 1,-4 1,-11 1,0 1,-1 1,-14 1,14 1,18 1,4 1,-14 1,8 1,14 1,8 1,-4 1,-25 1,-8 1,-1 1,13 1,7 1,-7 1,5 1,11 1,-11 1,-4 1,-2 1,8 1,11 1,-7 1,0 1,-28 1,-2 1,15 1,6 1,3 1,3 1,0 1,-7 1,5 1,-9 1,4 1,-11 1,1 1,-14 1,-9 1,-27 1,14 1,13 1,22 1,3 1,-8 1,13 1,-15 1,9 1,9 1,-15 1,18 1,-5 1,15 1,7 1,20 1,-23 1,-21 1,-13 1,-15 1,8 1,10 1,-4 1,-8 1,6 1,20 1,-5 1,14 1,-16 1,-25 1,21 1,-8 1,19 1,6 1,-30 1,-11 1,1 1,-5 1,6 1,7 1,1 1,-2 1,10 1,2 1,13 1,-16 1,-27 1,12 1,-7 1,41 1,-1 1,3 1,-5 1,-3 1,-5 1,-30 1,12 1,-19 1,-2 1,4 1,27 1,7 1,-1 1,4 1,3 1,-12 1,-15 1,-6 1,-8 1,-15 1,2 1,32 1,-3 1,17 1,15 1,-14 1,-14 1,-10 1,8 1,-11 1,-22 1,6 1,-19 1,24 1,41 1,-7 1,-24 1,-2 1,6 1,18 1,-4 1,-6 1,-1 1,9 1,9 1,4 1,8 1,-18 1,-3 1,0 1,8 1,12 1,-11 1,-3 1,0 1,-11 1,7 1,4 1,13 1,-1 1,5 1,2 1,-28 1,3 1,10 1,-4 1,36 1,-2 1,-13 1,-4 1,-4 1,8 1,6 1,-14 1,2 1,-13 1,27 1,-16 1,4 1,-2 1,-1 1,12 1,14 1,-6 1,-5 1,1 1,-9 1,6 1,15 1,-21 1,-10 1,-13 1,6 1,15 1,19 1,8 1,-12 1,-4 1,-10 1,11 1,-29 1,-3 1,8 1,8 1,10 1,-4 1,-6 1,14 1,-28 1,-8 1,2 1,6 1,-1 1,9 1,-8 1,-1 1,-10 1,16 1,-14 1,4 1,-1 1,-15 1,11 1,8 1,6 1,14 1,13 1,-5 1,-8 1,-9 1,-5 1,6 1,-5 1,-6 1,8 1,-1 1,6 1,-18 1,8 1,-21 1,28 1,24 1,-15 1,-2 1,-3 1,-1 1,-11 1,8 1,-4 1,-13 1,-5 1,6 1,-2 1,12 1,6 1,-2 1,-23 1,3 1,-2 1,14 1,5 1,11 1,-8 1,-9 1,6 1,2 1,4 1,3 1,-8 1,-14 1,-5 1,9 1,-2 1,14 1,-7 1,-5 1,1 1,-5 1,8 1,-3 1,-9 1,11 1,7 1,7 1,9 1,-1 1,6 1,-15 1,-22 1,-5 1,-28 1,-1 1,7 1,12 1,29 1,0 1,14 1,0 1,-25 1,-34 1,-1 1,28 1,19 1,-2 1,-20 1,-12 1,3 1,4 1,1 1,20 1,13 1,3 1,-7 1,4 1,0 1,-3 1,-35 1,-5 1,-9 1,20 1,20 1,0 1,10 1,5 1,10 1,0 1,-9 1,-5 1,-7 1,-8 1,-14 1,-3 1,0 1,8 1,4 1,10 1,-2 1,-7 1,7 1,4 1,-6 1,-15 1,6 1,4 1,-2 1,17 1,-12 1,-10 1,-4 1,14 1,0 1,4 1,3 1,3 1,-14 1,-10 1,1 1,9 1,17 1,7 1,0 1,11 1,-11 1,-9 1,0 1,6 1,2 1,-3 1,7 1,-29 1,-14 1,5 1,26 1,16 1,-9 1,-8 1,-13 1,20 1,1 1,4 1,-8 1,-29 1,-1 1,23 1,6 1,-2 1,14 1,-7 1,-9 1,9 1,-13 1,9 1,-27 1,-2 1,28 1,2 1,-1 1,-4 1,-5 1,9 1,-13 1,10 1,13 1,1 1,-5 1,-14 1,6 1,14 1,-5 1,1 1,-8 1,-18 1,-14 1,2 1,18 1,13 1,-5 1,13 1,-8 1,-3 1,3 1,14 1,2 1,-15 1,3 1,7 1,6 1,-3 1,-6 1,-15 1,-18 1,21 1,-28 1,-3 1,17 1,9 1,5 1,20 1,-6 1,0 1,-16 1,4 1,15 1,1 1,-10 1,3 1,-4 1,-6 1,-29 1,-28 1,19 1,10 1,27 1,-2 1,7 1,1 1,-1 1,-12 1,-19 1,-7 1,9 1,-1 1,5 1,-14 1,7 1,10 1,-4 1,15 1,8 1,16 1,-4 1,6 1,-5 1,-7 1,11 1,6 1,-11 1,-12 1,-14 1,15 1,-5 1,-15 1,-2 1,2 1,26 1,15 1,-1 1,-2 1,-10 1,28 1,-5 1,-17 1,10 1,-13 1,13 1,-5 1,-10 1,-5 1,26 1,-24 1,2 1,-5 1,-21 1,-6 1,2 1,23 1,7 1,4 1,-18 1,-13 1,-23 1,34 1,9 1,14 1,-4 1,8 1,-1" fill="none" stroke="#8000ff" stroke-width="1.1" vector-effect="non-scaling-stroke" stroke-linejoin="round"/>
<line x1="116" x2="2476" y1="762" y2="762" stroke="#8000ff" stroke-width="2.5" stroke-dasharray="17 7"/>
<path transform="translate(116,0) scale(0.75,0.5)" d="M0,1931 l1,8 1,-1 1,-8 1,-8 1,-14 1,16 1,25 1,-1 1,-5 1,20 1,5 1,19 1,-11 1,-4 1,-11 1,10 1,1 1,-25 1,-1 1,-3 1,-20 1,7 1,8 1,17 1,20 1,-14 1,-12 1,-19 1,8 1,-12 1,11 1,16 1,-13 1,17 1,11 1,9 1,-8 1,0 1,-2 1,-4 1,-6 1,-14 1,-16 1,2 1,9 1,15 1,2 1,-14 1,15 1,14 1,13 1,-5 1,-21 1,-17 1,18 1,12 1,14 1,-8 1,-24 1,3 1,-4 1,4 1,3 1,1 1,3 1,-24 1,-4 1,-10 1,10 1,17 1,21 1,5 1,-7 1,-9 1,-8 1,-5 1,-3 1,-6 1,4 1,-2 1,13 1,-16 1,-2 1,-18 1,18 1,23 1,0 1,-4 1,-16 1,-1 1,10 1,14 1,-12 1,-8 1,9 1,-16 1,11 1,-30 1,18 1,10 1,-11 1,5 1,3 1,4 1,5 1,3 1,-13 1,1 1,0 1,7 1,-7 1,9 1,-12 1,-7 1,10 1,11 1,2 1,-11 1,6 1,-10 1,-8 1,-1 1,-8 1,36 1,8 1,13 1,4 1,-13 1,-9 1,16 1,8 1,-25 1,2 1,-5 1,-15 1,4 1,0 1,-5 1,9 1,6 1,1 1,5 1,2 1,-1 1,8 1,20 1,12 1,-18 1,-3 1,-3 1,-5 1,1 1,-12 1,10 1,13 1,-8 1,-3 1,4 1,-3 1,-10 1,-13 1,17 1,1 1,26 1,-7 1,-27 1,2 1,-20 1,-16 1,20 1,-1 1,-4 1,20 1,18 1,-10 1,-26 1,-5 1,11 1,-1 1,3 1,-12 1,3 1,3 1,-9 1,1 1,11 1,-10 1,-10 1,-4 1,-12 1,5 1,2 1,19 1,-2 1,25 1,-18 1,-23 1,2 1,-1 1,6 1,-12 1,-4 1,23 1,-12 1,32 1,10 1,8 1,-17 1,-2 1,-5 1,-13 1,15 1,-14 1,11 1,26 1,-17 1,11 1,2 1,-6 1,-2 1,-20 1,-16 1,2 1,20 1,-8 1,-22 1,30 1,7 1,11 1,-8 1,12 1,-23 1,-8 1,1 1,11 1,13 1,5 1,-6 1,-9 1,2 1,-18 1,-1 1,7 1,9 1,-4 1,-22 1,17 1,-13 1,-10 1,9 1,1 1,-8 1,-27 1,23 1,23 1,16 1,-1 1,-6 1,-10 1,-3 1,20 1,-3 1,9 1,-8 1,-5 1,-19 1,10 1,-7 1,-4 1,-2 1,6 1,14 1,-11 1,-9 1,-6 1,-5 1,9 1,24 1,-14 1,-6 1,-6 1,15 1,27 1,-1 1,-24 1,-6 1,-2 1,20 1,5 1,3 1,-28 1,27 1,-7 1,-3 1,-19 1,8 1,18 1,-6 1,3 1,8 1,-8 1,2 1,-6 1,-1 1,9 1,-5 1,-2 1,-13 1,-5 1,16 1,-5 1,-4 1,-15 1,-3 1,8 1,1 1,7 1,-4 1,-8 1,-3 1,-11 1,27 1,4 1,2 1,1 1,-11 1,-14 1,18 1,12 1,-19 1,33 1,1 1,9 1,-10 1,-26 1,15 1,1 1,-2 1,2 1,-10 1,9 1,15 1,-14 1,-4 1,-7 1,10 1,14 1,-5 1,-6 1,-4 1,-6 1,12 1,21 1,-2 1,-22 1,-10 1,-7 1,-28 1,7 1,-6 1,26 1,-12 1,-4 1,-2 1,-15 1,23 1,6 1,-11 1,22 1,4 1,-26 1,11 1,7 1,10 1,10 1,0 1,-32 1,-7 1,-11 1,-16 1,38 1,1 1,-18 1,8 1,-7 1,13 1,-12 1,1 1,-16 1,16 1,16 1,23 1,15 1,-18 1,-21 1,-21 1,15 1,7 1,7 1,9 1,-13 1,-6 1,0 1,12 1,0 1,-22 1,-2 1,6 1,15 1,11 1,-14 1,3 1,-5 1,-24 1,-13 1,-9 1,36 1,9 1,14 1,-11 1,4 1,-15 1,-17 1,-7 1,-12 1,17 1,11 1,-4 1,5 1,-10 1,-6 1,4 1,0 1,8 1,8 1,10 1,0 1,0 1,0 1,-12 1,7 1,2 1,-23 1,-7 1,11 1,21 1,19 1,-5 1,-7 1,1 1,-12 1,14 1,14 1,-17 1,-11 1,1 1,8 1,0 1,-2 1,8 1,0 1,10 1,-3 1,-12 1,-6 1,-3 1,1 1,-1 1,-10 1,13 1,13 1,-16 1,2 1,-14 1,-12 1,5 1,-6 1,11 1,-2 1,28 1,1 1,-16 1,10 1,-1 1,-12 1,19 1,-10 1,17 1,-18 1,5 1,-13 1,0 1,17 1,6 1,-30 1,12 1,7 1,-10 1,-10 1,8 1,6 1,37 1,6 1,-21 1,4 1,-8 1,-20 1,19 1,-4 1,-3 1,8 1,-1 1,-1 1,3 1,2 1,-2 1,-15 1,4 1,17 1,-17 1,15 1,4 1,12 1,-12 1,7 1,-26 1,2 1,5 1,8 1,-23 1,11 1,-5 1,-6 1,-3 1,1 1,9 1,-9 1,6 1,-1 1,-5 1,10 1,16 1,18 1,-21 1,-5 1,4 1,-21 1,4 1,10 1,0 1,2 1,-16 1,16 1,7 1,-9 1,-2 1,12 1,-14 1,-6 1,22 1,-10 1,22 1,5 1,-14 1,-15 1,2 1,-18 1,7 1,-15 1,21 1,14 1,6 1,0 1,3 1,-19 1,11 1,0 1,2 1,-20 1,23 1,-4 1,-5 1,16 1,0 1,-12 1,-4 1,10 1,5 1,2 1,0 1,-22 1,-11 1,8 1,16 1,22 1,0 1,-8 1,9 1,1 1,-30 1,-9 1,16 1,-7 1,-13 1,-3 1,-18 1,7 1,21 1,8 1,4 1,9 1,4 1,15 1,-14 1,-3 1,6 1,-31 1,11 1,2 1,-3 1,-1 1,4 1,-8 1,-4 1,-7 1,16 1,7 1,-9 1,15 1,-11 1,-7 1,-4 1,12 1,-13 1,-26 1,15 1,10 1,10 1,-5 1,-9 1,20 1,-9 1,1 1,-19 1,-19 1,17 1,13 1,-2 1,5 1,2 1,2 1,-8 1,2 1,4 1,1 1,-6 1,-12 1,33 1,-12 1,3 1,12 1,-12 1,-8 1,-11 1,-8 1,12 1,4 1,-15 1,14 1,-5 1,9 1,1 1,-6 1,4 1,-12 1,-1 1,2 1,-1 1,-7 1,-2 1,9 1,-1 1,1 1,35 1,-24 1,-9 1,19 1,5 1,-14 1,2 1,1 1,12 1,-2 1,-2 1,-4 1,-6 1,-33 1,0 1,-3 1,25 1,-2 1,-6 1,-3 1,16 1,-14 1,5 1,-20 1,2 1,16 1,14 1,10 1,-1 1,-7 1,-8 1,11 1,-12 1,-1 1,-16 1,-7 1,24 1,26 1,-16 1,-15 1,13 1,2 1,-4 1,-15 1,0 1,7 1,3 1,-6 1,-4 1,1 1,-3 1,1 1,7 1,19 1,-6 1,14 1,-2 1,-23 1,2 1,6 1,3 1,-21 1,-6 1,9 1,-1 1,16 1,-10 1,-11 1,7 1,-11 1,2 1,-4 1,-19 1,2 1,-21 1,16 1,20 1,24 1,0 1,-11 1,-12 1,-4 1,5 1,-22 1,7 1,7 1,14 1,-7 1,0 1,-22 1,17 1,12 1,1 1,-9 1,2 1,16 1,-3 1,6 1,-30 1,-6 1,-4 1,22 1,21 1,19 1,-7 1,-18 1,-5 1,-20 1,1 1,24 1,-9 1,-6 1,8 1,-3 1,34 1,-2 1,4 1,0 1,9 1,-19 1,-6 1,-2 1,-20 1,-3 1,-19 1,3 1,12 1,3 1,23 1,-19 1,3 1,-15 1,23 1,1 1,0 1,-19 1,-14 1,9 1,15 1,18 1,-1 1,3 1,6 1,4 1,5 1,3 1,6 1,-1 1,-6 1,-13 1,12 1,8 1,5 1,22 1,-17 1,-32 1,-7 1,-17 1,3 1,18 1,2 1,-6 1,3 1,15 1,0 1,2 1,-1 1,-3 1,-10 1,-3 1,-6 1,4 1,-8 1,-8 1,14 1,1 1,2 1,17 1,-13 1,3 1,-25 1,-4 1,-14 1,6 1,1 1,16 1,-13 1,14 1,8 1,-12 1,7 1,-9 1,12 1,4 1,10 1,-8 1,-17 1,-8 1,-3 1,11 1,1 1,5 1,-7 1,-4 1,1 1,-2 1,9 1,14 1,-11 1,-16 1,3 1,8 1,-5 1,-14 1,4 1,-21 1,7 1,13 1,22 1,10 1,-7 1,-3 1,17 1,10 1,-15 1,-18 1,38 1,-6 1,-6 1,-17 1,0 1,23 1,-20 1,18 1,-4 1,-16 1,3 1,-8 1,14 1,-23 1,2 1,18 1,19 1,4 1,2 1,-33 1,-17 1,20 1,10 1,6 1,-17 1,-12 1,-7 1,9 1,9 1,0 1,-12 1,14 1,4 1,5 1,-1 1,3 1,10 1,-12 1,-15 1,-10 1,11 1,-4 1,-6 1,27 1,6 1,22 1,1 1,-10 1,-10 1,-7 1,1 1,3 1,33 1,-24 1,0 1,-2 1,-11 1,-5 1,-2 1,4 1,-3 1,19 1,-35 1,-2 1,0 1,13 1,20 1,4 1,-28 1,-10 1,5 1,6 1,27 1,17 1,2 1,-19 1,-18 1,-15 1,-13 1,16 1,17 1,8 1,1 1,12 1,-8 1,3 1,-11 1,2 1,10 1,2 1,-3 1,-3 1,-7 1,-16 1,-12 1,3 1,-3 1,-2 1,-14 1,11 1,10 1,-11 1,-12 1,8 1,7 1,8 1,11 1,-9 1,-9 1,20 1,-8 1,4 1,3 1,-13 1,3 1,9 1,7 1,-10 1,-32 1,4 1,0 1,8 1,-2 1,17 1,-3 1,-6 1,-8 1,-18 1,3 1,-3 1,14 1,23 1,7 1,-6 1,-3 1,-2 1,-3 1,-12 1,6 1,-2 1,35 1,3 1,-5 1,-9 1,3 1,14 1,0 1,4 1,-20 1,10 1,-13 1,11 1,7 1,-6 1,1 1,-16 1,-25 1,10 1,-5 1,-14 1,16 1,4 1,20 1,-9 1,27 1,-24 1,-13 1,-13 1,13 1,11 1,-1 1,3 1,0 1,-18 1,-6 1,-1 1,22 1,11 1,2 1,-3 1,-12 1,-12 1,2 1,6 1,-10 1,14 1,-22 1,2 1,-3 1,8 1,-7 1,-3 1,19 1,7 1,17 1,-32 1,-1 1,12 1,-1 1,-16 1,6 1,3 1,-8 1,7 1,-1 1,16 1,12 1,11 1,-8 1,-25 1,6 1,-2 1,10 1,8 1,-3 1,-4 1,15 1,-13 1,5 1,7 1,5 1,-26 1,-24 1,28 1,18 1,4 1,-9 1,-4 1,-5 1,5 1,0 1,5 1,11 1,-11 1,-23 1,2 1,17 1,12 1,12 1,0 1,-4 1,-11 1,-20 1,-3 1,2 1,21 1,5 1,14 1,6 1,-14 1,-22 1,-7 1,-9 1,18 1,-3 1,4 1,-4 1,-8 1,-11 1,15 1,7 1,-12 1,-6 1,9 1,2 1,-2 1,-9 1,15 1,4 1,-8 1,-13 1,4 1,-12 1,19 1,-8 1,3 1,-2 1,16 1,-21 1,-2 1,-14 1,-7 1,6 1,22 1,-9 1,6 1,11 1,-12 1,4 1,3 1,-5 1,15 1,-5 1,-15 1,-10 1,12 1,4 1,11 1,7 1,6 1,9 1,-23 1,9 1,-14 1,5 1,8 1,-3 1,-5 1,-6 1,-5 1,14 1,4 1,-7 1,14 1,-9 1,-3 1,-3 1,6 1,18 1,-10 1,-7 1,-11 1,-10 1,-4 1,-10 1,-16 1,16 1,-4 1,31 1,17 1,1 1,-20 1,10 1,-14 1,6 1,20 1,-5 1,-22 1,7 1,2 1,5 1,-1 1,8 1,-3 1,-20 1,4 1,6 1,26 1,-15 1,3 1,-22 1,-18 1,18 1,-20 1,18 1,21 1,-7 1,-11 1,1 1,-20 1,-6 1,17 1,14 1,6 1,-11 1,7 1,6 1,-3 1,9 1,5 1,-22 1,10 1,-21 1,-12 1,1 1,10 1,4 1,-1 1,-19 1,-4 1,5 1,12 1,-1 1,10 1,15 1,-15 1,-9 1,-28 1,9 1,11 1,3 1,-11 1,-11 1,9 1,11 1,12 1,4 1,-7 1,9 1,-15 1,0 1,3 1,6 1,11 1,-17 1,-15 1,-6 1,2 1,-11 1,12 1,20 1,14 1,-11 1,12 1,-12 1,-22 1,-2 1,29 1,18 1,21 1,-12 1,-21 1,-5 1,-10 1,9 1,-11 1,18 1,-4 1,-33 1,19 1,-12 1,26 1,7 1,4 1,-8 1,-13 1,-17 1,14 1,-4 1,-6 1,1 1,-14 1,16 1,-9 1,9 1,18 1,-2 1,-8 1,-4 1,-5 1,21 1,14 1,-7 1,1 1,-16 1,-9 1,-3 1,-12 1,15 1,-14 1,7 1,-17 1,12 1,-7 1,17 1,8 1,5 1,-2 1,6 1,5 1,12 1,-10 1,-18 1,-2 1,10 1,13 1,17 1,-6 1,2 1,-17 1,12 1,9 1,-13 1,1 1,5 1,-16 1,1 1,10 1,14 1,4 1,3 1,-24 1,-17 1,9 1,5 1,6 1,5 1,-18 1,2 1,7 1,18 1,-2 1,-15 1,-4 1,-1 1,7 1,6 1,-17 1,6 1,3 1,17 1,-9 1,2 1,13 1,-12 1,-3 1,2 1,20 1,-13 1,-11 1,-4 1,-1 1,-8 1,2 1,-4 1,8 1,10 1,6 1,8 1,-19 1,-6 1,-8 1,-15 1,8 1,0 1,2 1,-5 1,3 1,15 1,16 1,7 1,4 1,-10 1,-11 1,-6 1,-22 1,-1 1,4 1,9 1,5 1,18 1,-2 1,3 1,-6 1,-7 1,-8 1,5 1,-22 1,6 1,-4 1,9 1,6 1,-18 1,-15 1,12 1,5 1,10 1,14 1,18 1,-15 1,-21 1,-30 1,2 1,-2 1,17 1,-21 1,16 1,-26 1,20 1,6 1,-9 1,9 1,16 1,7 1,-2 1,23 1,-6 1,-22 1,-18 1,3 1,-13 1,10 1,17 1,28 1,4 1,-9 1,19 1,-24 1,-14 1,-9 1,11 1,-15 1,-3 1,-2 1,1 1,21 1,18 1,5 1,6 1,-1 1,-25 1,5 1,-15 1,13 1,16 1,-11 1,-2 1,10 1,-5 1,-19 1,15 1,-3 1,-4 1,-4 1,6 1,-13 1,9 1,25 1,12 1,10 1,13 1,-4 1,-5 1,-6 1,-5 1,37 1,-21 1,-3 1,-14 1,-1 1,9 1,-8 1,13 1,-8 1,2 1,-22 1,-6 1,26 1,-2 1,3 1,-9 1,-1 1,-2 1,-7 1,-5 1,20 1,-6 1,-5 1,-17 1,-21 1,-8 1,10 1,-5 1,19 1,7 1,4 1,-9 1,-2 1,12 1,12 1,1 1,-9 1,-12 1,-8 1,12 1,-14 1,-6 1,-16 1,6 1,-5 1,2 1,7 1,2 1,-19 1,27 1,0 1,-7 1,11 1,8 1,-21 1,-6 1,9 1,2 1,-8 1,-3 1,11 1,-1 1,-5 1,6 1,-4 1,24 1,0 1,-2 1,-24 1,-14 1,3 1,-10 1,11 1,-11 1,-4 1,1 1,6 1,11 1,8 1,18 1,-20 1,17 1,-9 1,-23 1,-3 1,-8 1,16 1,16 1,-23 1,16 1,6 1,-7 1,2 1,-2 1,1 1,14 1,-6 1,18 1,-7 1,-6 1,-5 1,-11 1,2 1,-22 1,13 1,10 1,15 1,-20 1,19 1,-4 1,21 1,-14 1,2 1,-7 1,-8 1,3 1,17 1,-6 1,-2 1,13 1,-5 1,8 1,11 1,21 1,2 1,-27 1,-8 1,-2 1,19 1,-15 1,18 1,0 1,-11 1,13 1,-3 1,-3 1,-3 1,15 1,-11 1,6 1,-14 1,-12 1,-14 1,3 1,-14 1,6 1,10 1,11 1,2 1,-24 1,-21 1,7 1,10 1,4 1,1 1,13 1,-8 1,-3 1,-14 1,-1 1,6 1,5 1,-18 1,-1 1,-9 1,-13 1,-13 1,22 1,6 1,13 1,35 1,40 1,32 1,28 1,35 1,26 1,20 1,20 1,14 1,21 1,19 1,-3 1,-9 1,-8 1,-5 1,-14 1,-14 1,-12 1,-11 1,6 1,12 1,14 1,10 1,7 1,14 1,12 1,-3 1,-15 1,-18 1,-20 1,-15 1,-18 1,-22 1,-17 1,-23 1,-23 1,-14 1,-15 1,-25 1,-16 1,-14 1,-14 1,-5 1,-13 1,-15 1,-4 1,-6 1,-8 1,-10 1,-2 1,-1 1,-6 1,-7 1,-14 1,-12 1,-4 1,-10 1,-13 1,-15 1,-12 1,-8 1,-6 1,-7 1,-8 1,-20 1,-10 1,2 1,5 1,7 1,40 1,14 1,-27 1,-33 1,-4 1,5 1,8 1,22 1,2 1,11 1,-21 1,52 1,11 1,9 1,-15 1,-4 1,15 1,9 1,19 1,8 1,9 1,3 1,-6 1,6 1,8 1,-11 1,10 1,17 1,12 1,-15 1,-8 1,3 1,-6 1,10 1,-14 1,16 1,19 1,0 1,6 1,15 1,12 1,-2 1,8 1,-14 1,-37 1,-15 1,23 1,16 1,-13 1,-6 1,-17 1,-7 1,-10 1,16 1,28 1,1 1,-5 1,5 1,-7 1,11 1,7 1,6 1,-5 1,5 1,-10 1,9 1,-11 1,7 1,4 1,7 1,11 1,3 1,-4 1,22 1,-16 1,13 1,5 1,-9 1,19 1,1 1,-7 1,-20 1,-1 1,-9 1,0 1,11 1,12 1,4 1,28 1,-23 1,-29 1,8 1,0 1,19 1,26 1,-1 1,-23 1,3 1,-2 1,9 1,-12 1,-13 1,-10 1,-12 1,-1 1,5 1,-3 1,28 1,-11 1,3 1,-15 1,-4 1,17 1,-5 1,-11 1,-6 1,11 1,21 1,-15 1,5 1,-10 1,-15 1,-12 1,9 1,26 1,-16 1,-1 1,10 1,4 1,-12 1,-18 1,16 1,1 1,13 1,15 1,-20 1,-25 1,-10 1,24 1,39 1,0 1,-10 1,-20 1,-10 1,-10 1,15 1,-3 1,8 1,11 1,-38 1,5 1,-6 1,31 1,6 1,-3 1,-5 1,-5 1,30 1,7 1,6 1,-12 1,-7 1,-23 1,-17 1,1 1,10 1,4 1,23 1,-20 1,-22 1,6 1,15 1,13 1,8 1,12 1,-2 1,-8 1,16 1,-14 1,-3 1,-3 1,-7 1,18 1,-43 1,-14 1,15 1,34 1,3 1,-14 1,15 1,-18 1,-10 1,-3 1,2 1,15 1,12 1,-2 1,-6 1,-14 1,10 1,0 1,-1 1,20 1,-7 1,16 1,-5 1,-3 1,-11 1,-6 1,17 1,-10 1,-7 1,-19 1,23 1,3 1,-20 1,-35 1,-3 1,28 1,4 1,14 1,2 1,-6 1,13 1,-35 1,13 1,-1 1,-13 1,27 1,13 1,-11 1,-26 1,-8 1,18 1,14 1,15 1,-5 1,-2 1,3 1,-11 1,-6 1,-9 1,-12 1,4 1,7 1,10 1,18 1,3 1,-6 1,-1 1,6 1,-16 1,2 1,-6 1,-20 1,-6 1,-20 1,31 1,25 1,24 1,7 1,-29 1,-1 1,-36 1,1 1,-10 1,15 1,5 1,2 1,5 1,12 1,2 1,7 1,14 1,-17 1,-13 1,19 1,-7 1,0 1,10 1,2 1,12 1,-6 1,-25 1,-3 1,23 1,14 1,4 1,2 1,-2 1,8 1,-15 1,-20 1,3 1,-16 1,11 1,2 1,-44 1,24 1,-8 1,30 1,15 1,-15 1,-32 1,-5 1,13 1,29 1,-10 1,-5 1,-8 1,-15 1,5 1,9 1,-15 1,13 1,-28 1,30 1,-1 1,9 1,3 1,2 1,-4 1,-6 1,-10 1,12 1,-10 1,5 1,-18 1,-4 1,14 1,11 1,-8 1,4 1,11 1,-14 1,8 1,7 1,-28 1,-20 1,16 1,24 1,1 1,-5 1,4 1,-1 1,11 1,-8 1,-21 1,5 1,-2 1,12 1,-2 1,-21 1,23 1,-9 1,6 1,-6 1,2 1,-4 1,-6 1,12 1,1 1,-1 1,-18 1,6 1,-15 1,0 1,6 1,8 1,-7 1,-5 1,-3 1,2 1,12 1,-3 1,27 1,-5 1,-14 1,3 1,13 1,11 1,12 1,-1 1,-20 1,9 1,0 1,-6 1,12 1,-22 1,-3 1,-5 1,7 1,1 1,10 1,4 1,18 1,-6 1,-30 1,-2 1,14 1,-4 1,5 1,-14 1,18 1,-7 1,9 1,11 1,-3 1,-17 1,6 1,6 1,11 1,-9 1,18 1,-8 1,-12 1,-14 1,14 1,4 1,-9 1,9 1,4 1,-19 1,0 1,13 1,-1 1,19 1,8 1,9 1,3 1,-20 1,-12 1,-10 1,-5 1,-18 1,4 1,21 1,7 1,-3 1,-10 1,10 1,-7 1,14 1,-6 1,24 1,-10 1,-18 1,10 1,-16 1,12 1,1 1,-2 1,-8 1,2 1,-2 1,-23 1,-4 1,17 1,2 1,8 1,-14 1,-16 1,2 1,-6 1,-6 1,4 1,17 1,16 1,-6 1,12 1,18 1,-11 1,-19 1,-28 1,10 1,12 1,-9 1,7 1,-25 1,-2 1,6 1,12 1,6 1,5 1,0 1,-2 1,3 1,7 1,-16 1,12 1,-2 1,18 1,8 1,9 1,-12 1,-1 1,-5 1,-9 1,-7 1,0 1,3 1,-15 1,18 1,2 1,18 1,-8 1,-19 1,1 1,27 1,-21 1,-13 1,-18 1,0 1,17 1,13 1,-4 1,14 1,-1 1,-6 1,4 1,-21 1,-7 1,-10 1,9 1,-17 1,11 1,-6 1,16 1,-16 1,14 1,3 1,-4 1,7 1,-2 1,29 1,2 1,-19 1,5 1,1 1,3 1,4 1,-18 1,9 1,-22 1,-15 1,4 1,-4 1,21 1,2 1,7 1,22 1,2 1,-14 1,-17 1,6 1,4 1,-7 1,16 1,-6 1,6 1,-1 1,-16 1,5 1,-3 1,-9 1,5 1,28 1,19 1,10 1,-10 1,6 1,-4 1,-10 1,-8 1,1 1,-20 1,-6 1,19 1,-9 1,16 1,-8 1,10 1,3 1,1 1,-9 1,-2 1,2 1,-3 1,-13 1,3 1,19 1,-4 1,-17 1,-9 1,-18 1,14 1,10 1,48 1,-22 1,-2 1,-13 1,-29 1,5 1,-9 1,5 1,7 1,26 1,0 1,-9 1,1 1,-9 1,-1 1,2 1,-13 1,-10 1,10 1,1 1,5 1,2 1,3 1,-8 1,1 1,-14 1,-4 1,0 1,-9 1,8 1,10 1,3 1,12 1,0 1,9 1,1 1,-6 1,-7 1,-14 1,7 1,4 1,16 1,-12 1,4 1,1 1,-7 1,-4 1,3 1,-15 1,7 1,-19 1,6 1,8 1,0 1,-1 1,19 1,28 1,-12 1,-3 1,-13 1,-22 1,1 1,13 1,-3 1,18 1,-8 1,-7 1,-8 1,-11 1,12 1,-3 1,4 1,-14 1,5 1,-4 1,2 1,-15 1,-13 1,13 1,16 1,12 1,-2 1,-1 1,-25 1,28 1,1 1,1 1,2 1,-12 1,10 1,-11 1,6 1,-3 1,5 1,10 1,-7 1,-8 1,0 1,8 1,12 1,-20 1,-6 1,16 1,-10 1,-3 1,4 1,-3 1,8 1,-7 1,15 1,2 1,17 1,-6 1,-22 1,5 1,9 1,4 1,-19 1,9 1,17 1,-3 1,8 1,-6 1,-19 1,13 1,-1 1,0 1,4 1,7 1,-10 1,17 1,-10 1,21 1,20 1,7 1,-1 1,-31 1,-15 1,5 1,14 1,6 1,-15 1,0 1,-20 1,-7 1,9 1,-11 1,12 1,-18 1,9 1,9 1,5 1,16 1,-20 1,-27 1,-10 1,10 1,4 1,19 1,-20 1,-9 1,-4 1,-14 1,12 1,7 1,9 1,0 1,9 1,-15 1,-15 1,14 1,21 1,6 1,-24 1,3 1,18 1,-28 1,14 1,-6 1,-31 1,27 1,-1 1,15 1,-2 1,-1 1,-6 1,4 1,-2 1,0 1,-8 1,15 1,0 1,14 1,-7 1,1 1,0 1,15 1,-5 1,-1 1,19 1,2 1,-19 1,-16 1,2 1,-5 1,36 1,-9 1,5 1,-26 1,-6 1,-5 1,4 1,7 1,18 1,-21 1,-13 1,-1 1,4 1,14 1,-7 1,12 1,6 1,12 1,-22 1,1 1,4 1,16 1,25 1,-4 1,-24 1,11 1,24 1,-29 1,-13 1,-29 1,14 1,6 1,19 1,-4 1,-10 1,19 1,-3 1,-5 1,6 1,-6 1,6 1,-10 1,-10 1,6 1,-10 1,13 1,-27 1,25 1,5 1,4 1,-10 1,-5 1,-12 1,-1 1,2 1,-10 1,11 1,22 1,11 1,-19 1,-1 1,10 1,19 1,1 1,-31 1,-9 1,-1 1,14 1,13 1,-12 1,-3 1,8 1,-6 1,-3 1,-5 1,11 1,3 1,-9 1,7 1,-19 1,5 1,8 1,8 1,7 1,-3 1,3 1,-6 1,0 1,-12 1,5 1,-2 1,4 1,-17 1,-5 1,-27 1,8 1,10 1,21 1,-5 1,-12 1,16 1,-12 1,18 1,10 1,-18 1,15 1,-10 1,20 1,1 1,22 1,-10 1,-28 1,-15 1,-15 1,2 1,13 1,-2 1,-5 1,4 1,21 1,-2 1,11 1,-20 1,-26 1,29 1,-19 1,14 1,16 1,-30 1,-17 1,3 1,0 1,12 1,6 1,4 1,1 1,3 1,2 1,13 1,-12 1,-33 1,7 1,-2 1,41 1,6 1,9 1,-5 1,-9 1,-12 1,-24 1,26 1,-15 1,-1 1,0 1,23 1,0 1,-14 1,-4 1,-7 1,-7 1,6 1,-3 1,-15 1,-12 1,6 1,34 1,-9 1,9 1,16 1,-14 1,-13 1,-10 1,6 1,-6 1,-22 1,2 1,-19 1,24 1,32 1,-10 1,-13 1,-3 1,9 1,20 1,-7 1,2 1,-3 1,4 1,11 1,10 1,3 1,-23 1,13 1,6 1,6 1,10 1,-20 1,-8 1,11 1,-10 1,-3 1,3 1,14 1,-8 1,3 1,-4 1,-26 1,21 1,15 1,-11 1,21 1,2 1,-6 1,-5 1,-9 1,4 1,9 1,-12 1,0 1,-9 1,35 1,-13 1,-1 1,-12 1,5 1,13 1,4 1,-10 1,10 1,17 1,-15 1,2 1,18 1,-22 1,-17 1,-22 1,9 1,22 1,15 1,0 1,-8 1,-4 1,-14 1,14 1,-24 1,-3 1,13 1,13 1,10 1,-17 1,-16 1,7 1,-21 1,8 1,-4 1,4 1,5 1,2 1,-15 1,7 1,2 1,17 1,-19 1,5 1,-2 1,-17 1,11 1,10 1,7 1,9 1,10 1,1 1,-5 1,-5 1,-1 1,-2 1,-9 1,-7 1,3 1,-6 1,10 1,-21 1,11 1,-15 1,24 1,18 1,-15 1,-4 1,0 1,5 1,-11 1,14 1,-3 1,-10 1,-3 1,7 1,-6 1,13 1,2 1,-6 1,-22 1,-8 1,1 1,18 1,-6 1,11 1,4 1,-6 1,9 1,8 1,4 1,-7 1,-17 1,-10 1,-8 1,9 1,3 1,16 1,-6 1,5 1,-3 1,-16 1,15 1,-1 1,4 1,15 1,-9 1,7 1,10 1,-8 1,5 1,-7 1,-14 1,-2 1,-27 1,-5 1,4 1,14 1,17 1,-15 1,11 1,6 1,-19 1,-37 1,-11 1,33 1,26 1,-4 1,-9 1,-8 1,-3 1,1 1,-5 1,19 1,24 1,8 1,-10 1,2 1,2 1,-2 1,-38 1,-5 1,-5 1,14 1,13 1,8 1,5 1,2 1,19 1,6 1,-6 1,-11 1,-16 1,-8 1,-20 1,-2 1,12 1,16 1,7 1,6 1,-1 1,-9 1,1 1,-7 1,-4 1,-13 1,1 1,12 1,5 1,8 1,-15 1,-4 1,-6 1,22 1,-5 1,0 1,7 1,-7 1,-3 1,15 1,-1 1,-1 1,11 1,4 1,3 1,11 1,-10 1,-15 1,-11 1,5 1,9 1,3 1,7 1,-29 1,-11 1,1 1,22 1,12 1,-6 1,2 1,-8 1,13 1,-3 1,0 1,-19 1,-29 1,11 1,32 1,11 1,1 1,12 1,-4 1,-10 1,-6 1,-18 1,14 1,-24 1,0 1,32 1,0 1,-8 1,-5 1,-5 1,18 1,-8 1,4 1,7 1,0 1,3 1,-13 1,3 1,7 1,-4 1,-4 1,-12 1,-7 1,-10 1,1 1,18 1,14 1,-4 1,7 1,-7 1,3 1,5 1,8 1,-4 1,-21 1,-5 1,2 1,10 1,-2 1,-6 1,-8 1,-10 1,25 1,-23 1,-2 1,12 1,5 1,-11 1,22 1,2 1,-6 1,-7 1,18 1,17 1,-7 1,-33 1,-2 1,6 1,-4 1,-20 1,-14 1,19 1,7 1,20 1,-5 1,13 1,5 1,-3 1,-19 1,-23 1,-4 1,9 1,-11 1,3 1,2 1,10 1,11 1,1 1,14 1,9 1,11 1,-6 1,4 1,-1 1,-6 1,6 1,1 1,-25 1,-16 1,-9 1,19 1,-5 1,-11 1,13 1,-1 1,19 1,20 1,-3 1,-1 1,-9 1,24 1,-5 1,-13 1,10 1,-20 1,11 1,4 1,-5 1,-12 1,27 1,-23 1,-7 1,-4 1,-14 1,-3 1,1 1,18 1,7 1,-3 1,-18 1,-5 1,-20 1,38 1,1 1,5 1,-2 1,16 1,-2" fill="none" stroke="#00f2f2" stroke-width="1.1" vector-effect="non-scaling-stroke" stroke-linejoin="round"/>
<line x1="116" x2="2476" y1="1003.2" y2="1003.2" stroke="#00f2f2" stroke-width="2.5" stroke-dasharray="17 7"/>
<path transform="translate(116,0) scale(0.75,0.5)" d="M0,2365 l1,-1 1,14 1,18 1,5 1,-5 1,-9 1,-6 1,-2 1,0 1,1 1,-7 1,-17 1,-14 1,-1 1,6 1,5 1,-2 1,-4 1,1 1,7 1,11 1,16 1,9 1,-5 1,-9 1,-4 1,-8 1,-7 1,1 1,0 1,-7 1,-3 1,5 1,3 1,2 1,3 1,3 1,1 1,-8 1,-6 1,-5 1,-3 1,0 1,1 1,0 1,0 1,1 1,1 1,-4 1,3 1,6 1,-3 1,-2 1,-3 1,-3 1,6 1,1 1,-6 1,-1 1,1 1,7 1,10 1,2 1,-3 1,0 1,-3 1,-6 1,1 1,5 1,2 1,-1 1,-4 1,-10 1,-5 1,8 1,3 1,-8 1,-8 1,-2 1,4 1,7 1,8 1,12 1,8 1,10 1,3 1,-15 1,-23 1,-12 1,7 1,22 1,12 1,-2 1,-6 1,-5 1,-8 1,-8 1,-10 1,-7 1,0 1,7 1,6 1,3 1,5 1,0 1,-4 1,-3 1,-9 1,-17 1,-13 1,3 1,11 1,7 1,3 1,5 1,5 1,9 1,15 1,8 1,-6 1,-12 1,-17 1,-18 1,-9 1,3 1,11 1,8 1,-7 1,-8 1,5 1,13 1,15 1,13 1,3 1,4 1,4 1,4 1,9 1,5 1,-12 1,-22 1,-15 1,-1 1,13 1,17 1,9 1,-5 1,-8 1,-5 1,-3 1,6 1,13 1,7 1,0 1,-5 1,-9 1,-5 1,1 1,5 1,5 1,1 1,9 1,9 1,-1 1,0 1,6 1,4 1,3 1,2 1,-7 1,-4 1,8 1,12 1,2 1,-9 1,-14 1,-16 1,-11 1,-5 1,3 1,1 1,-8 1,-4 1,6 1,-1 1,5 1,19 1,18 1,5 1,-5 1,-13 1,-16 1,-15 1,-14 1,-2 1,18 1,17 1,1 1,-4 1,0 1,-2 1,-6 1,-11 1,-9 1,0 1,3 1,4 1,11 1,7 1,-2 1,-1 1,3 1,3 1,2 1,-5 1,-4 1,3 1,1 1,-4 1,-14 1,-14 1,5 1,17 1,20 1,12 1,-8 1,-9 1,1 1,-2 1,-10 1,-9 1,3 1,11 1,4 1,-4 1,-5 1,-4 1,-6 1,-3 1,-1 1,-1 1,5 1,15 1,15 1,4 1,-9 1,-12 1,-6 1,-3 1,-3 1,-10 1,-11 1,5 1,10 1,3 1,9 1,12 1,4 1,-1 1,-6 1,-2 1,13 1,11 1,1 1,1 1,-3 1,-4 1,4 1,0 1,-8 1,-7 1,-9 1,-12 1,-11 1,-4 1,6 1,14 1,16 1,9 1,-1 1,-5 1,0 1,3 1,-6 1,-9 1,5 1,16 1,10 1,1 1,-14 1,-21 1,-6 1,7 1,12 1,11 1,1 1,-7 1,3 1,7 1,1 1,-3 1,-3 1,-4 1,-5 1,-5 1,-11 1,-9 1,-2 1,5 1,7 1,7 1,7 1,2 1,1 1,5 1,8 1,1 1,-10 1,-7 1,-3 1,0 1,4 1,-7 1,-11 1,1 1,9 1,11 1,4 1,-7 1,-6 1,-1 1,0 1,0 1,-1 1,8 1,14 1,6 1,-5 1,-8 1,-4 1,5 1,7 1,-3 1,-9 1,-6 1,-4 1,-1 1,1 1,-3 1,-3 1,10 1,18 1,15 1,4 1,-8 1,-11 1,-5 1,-1 1,2 1,7 1,6 1,-7 1,-17 1,-12 1,4 1,11 1,9 1,6 1,-1 1,-6 1,-12 1,-3 1,15 1,15 1,8 1,1 1,-3 1,-5 1,0 1,6 1,7 1,10 1,9 1,-2 1,-19 1,-18 1,-5 1,-3 1,2 1,5 1,2 1,-2 1,-2 1,-10 1,-5 1,13 1,13 1,4 1,-1 1,-4 1,-5 1,-8 1,-13 1,-5 1,2 1,-6 1,-8 1,3 1,5 1,-2 1,-9 1,-11 1,1 1,13 1,11 1,2 1,-13 1,-15 1,-4 1,15 1,29 1,16 1,-13 1,-21 1,-11 1,8 1,19 1,8 1,-12 1,-15 1,-2 1,6 1,12 1,5 1,-10 1,-12 1,-3 1,3 1,8 1,8 1,-4 1,-12 1,-5 1,-1 1,0 1,9 1,3 1,3 1,6 1,-6 1,-10 1,6 1,14 1,7 1,3 1,5 1,-2 1,-4 1,13 1,19 1,5 1,-7 1,-16 1,-18 1,-2 1,10 1,11 1,4 1,-9 1,-3 1,7 1,-4 1,-11 1,-5 1,6 1,6 1,-1 1,-3 1,3 1,-4 1,-7 1,-3 1,0 1,0 1,-2 1,-5 1,-6 1,-1 1,3 1,11 1,12 1,1 1,-1 1,-2 1,-5 1,1 1,4 1,3 1,-5 1,-16 1,-15 1,-5 1,7 1,17 1,11 1,7 1,7 1,-1 1,-12 1,-16 1,-5 1,5 1,4 1,-2 1,-4 1,0 1,5 1,1 1,-5 1,-4 1,-7 1,-10 1,-7 1,-2 1,14 1,20 1,1 1,-15 1,-21 1,-10 1,2 1,-2 1,-1 1,6 1,7 1,7 1,0 1,-8 1,0 1,3 1,-12 1,-11 1,-5 1,4 1,10 1,4 1,-3 1,-1 1,-3 1,-13 1,-9 1,2 1,4 1,13 1,16 1,-3 1,-10 1,-8 1,-5 1,9 1,20 1,19 1,16 1,3 1,-14 1,-16 1,-6 1,3 1,1 1,-9 1,-14 1,-4 1,13 1,26 1,27 1,11 1,-2 1,-3 1,-5 1,-8 1,-11 1,-10 1,7 1,16 1,6 1,-1 1,0 1,7 1,9 1,1 1,-3 1,-4 1,-6 1,-7 1,-8 1,-5 1,-5 1,-7 1,-2 1,-6 1,-4 1,7 1,6 1,3 1,9 1,7 1,0 1,-2 1,-10 1,-10 1,4 1,14 1,8 1,6 1,5 1,-4 1,-21 1,-24 1,-3 1,5 1,-5 1,1 1,13 1,15 1,7 1,-14 1,-20 1,-5 1,7 1,3 1,-1 1,6 1,12 1,0 1,-7 1,-11 1,-11 1,0 1,5 1,0 1,-2 1,-4 1,-3 1,-1 1,4 1,7 1,5 1,1 1,-13 1,-15 1,-2 1,2 1,6 1,9 1,0 1,-7 1,-9 1,-7 1,1 1,4 1,5 1,8 1,10 1,8 1,6 1,3 1,0 1,-3 1,-4 1,-3 1,-4 1,0 1,2 1,-4 1,-11 1,-12 1,-5 1,-4 1,3 1,10 1,2 1,0 1,3 1,5 1,2 1,7 1,9 1,-7 1,-12 1,1 1,9 1,8 1,-1 1,-13 1,-18 1,-6 1,5 1,5 1,6 1,2 1,0 1,6 1,11 1,5 1,0 1,-7 1,-15 1,-13 1,1 1,12 1,6 1,-7 1,-11 1,0 1,12 1,8 1,4 1,-2 1,-9 1,-6 1,3 1,9 1,-1 1,-6 1,-1 1,4 1,3 1,-4 1,-12 1,-10 1,-4 1,-2 1,10 1,12 1,9 1,19 1,7 1,-12 1,-15 1,-10 1,4 1,3 1,-6 1,-6 1,-5 1,5 1,15 1,9 1,-8 1,-14 1,-12 1,-3 1,9 1,3 1,-2 1,11 1,17 1,14 1,3 1,-9 1,-12 1,-7 1,-2 1,-7 1,-9 1,-4 1,1 1,-4 1,-8 1,5 1,22 1,19 1,7 1,-9 1,-16 1,-7 1,-10 1,-7 1,5 1,8 1,4 1,-3 1,-5 1,4 1,8 1,-2 1,-9 1,-6 1,2 1,2 1,2 1,3 1,2 1,12 1,6 1,-5 1,1 1,3 1,3 1,9 1,-1 1,-13 1,-15 1,-11 1,-4 1,0 1,1 1,0 1,-5 1,-1 1,-2 1,-5 1,6 1,16 1,9 1,-6 1,-6 1,9 1,15 1,-2 1,-13 1,-11 1,1 1,13 1,21 1,14 1,4 1,-5 1,-11 1,-9 1,-10 1,-10 1,-5 1,4 1,4 1,0 1,2 1,7 1,5 1,1 1,-1 1,-5 1,-1 1,3 1,-5 1,-1 1,5 1,1 1,-5 1,-8 1,-3 1,3 1,5 1,2 1,-4 1,-12 1,-16 1,-9 1,-2 1,-1 1,5 1,6 1,6 1,10 1,11 1,6 1,-4 1,-9 1,-5 1,-1 1,-3 1,-2 1,5 1,7 1,7 1,0 1,-13 1,-4 1,9 1,9 1,4 1,1 1,-2 1,-3 1,1 1,4 1,1 1,-6 1,-6 1,1 1,6 1,7 1,9 1,6 1,0 1,1 1,0 1,-7 1,-4 1,-1 1,2 1,1 1,-3 1,-1 1,6 1,4 1,-6 1,-13 1,-13 1,-3 1,9 1,10 1,9 1,12 1,7 1,-5 1,-9 1,-1 1,-1 1,2 1,9 1,7 1,9 1,10 1,-1 1,-7 1,-7 1,-6 1,-2 1,0 1,3 1,-2 1,-7 1,-6 1,-3 1,5 1,7 1,11 1,11 1,6 1,3 1,0 1,-4 1,1 1,5 1,1 1,-11 1,-22 1,-12 1,7 1,9 1,10 1,5 1,-9 1,-9 1,1 1,-2 1,-2 1,2 1,5 1,2 1,-6 1,-2 1,10 1,14 1,10 1,-6 1,-18 1,-5 1,6 1,-2 1,-2 1,0 1,4 1,15 1,6 1,-8 1,-9 1,-8 1,1 1,11 1,7 1,1 1,1 1,-6 1,-12 1,-7 1,1 1,11 1,17 1,12 1,2 1,-6 1,-15 1,-14 1,2 1,14 1,13 1,2 1,-8 1,-8 1,-1 1,-3 1,-1 1,6 1,5 1,7 1,16 1,6 1,-11 1,-4 1,4 1,-5 1,-12 1,-15 1,-13 1,-7 1,0 1,15 1,21 1,8 1,2 1,-1 1,-5 1,-4 1,-5 1,-2 1,2 1,-3 1,-7 1,-2 1,0 1,-2 1,-3 1,-6 1,-11 1,-7 1,0 1,-1 1,-6 1,-7 1,-2 1,4 1,2 1,7 1,5 1,1 1,2 1,4 1,2 1,-4 1,0 1,-2 1,-6 1,4 1,16 1,14 1,4 1,-4 1,-2 1,6 1,0 1,-9 1,-12 1,-12 1,-4 1,3 1,6 1,6 1,3 1,2 1,-9 1,-9 1,-2 1,-2 1,5 1,11 1,6 1,-2 1,-7 1,-14 1,-7 1,5 1,6 1,0 1,-2 1,0 1,-1 1,2 1,11 1,8 1,-1 1,-9 1,-13 1,-6 1,1 1,6 1,14 1,15 1,3 1,-18 1,-19 1,-5 1,-2 1,2 1,8 1,7 1,4 1,-3 1,1 1,9 1,2 1,-8 1,-8 1,-4 1,-1 1,2 1,2 1,2 1,15 1,21 1,6 1,-14 1,-21 1,-5 1,7 1,-10 1,-17 1,-6 1,2 1,7 1,12 1,1 1,-15 1,-9 1,-2 1,8 1,18 1,7 1,-1 1,-2 1,-3 1,-1 1,2 1,-2 1,-4 1,-3 1,1 1,4 1,-1 1,0 1,-2 1,-4 1,6 1,-1 1,-9 1,-10 1,-4 1,7 1,7 1,6 1,5 1,-1 1,-6 1,-2 1,3 1,0 1,-7 1,-14 1,-17 1,-8 1,2 1,8 1,11 1,5 1,5 1,7 1,2 1,-5 1,1 1,1 1,-4 1,-2 1,10 1,10 1,-1 1,1 1,-3 1,-7 1,-3 1,-5 1,-10 1,1 1,6 1,-1 1,-9 1,-8 1,0 1,4 1,1 1,2 1,4 1,10 1,21 1,17 1,3 1,-9 1,-16 1,-16 1,-14 1,-17 1,-16 1,-3 1,16 1,19 1,8 1,8 1,12 1,9 1,0 1,-8 1,-15 1,-8 1,-4 1,0 1,-1 1,-11 1,-10 1,3 1,8 1,12 1,4 1,-6 1,1 1,8 1,2 1,-12 1,-9 1,6 1,4 1,1 1,-3 1,-11 1,-10 1,3 1,17 1,14 1,3 1,-2 1,2 1,1 1,-2 1,2 1,1 1,-8 1,-10 1,-2 1,7 1,15 1,7 1,-11 1,-15 1,-12 1,-10 1,-3 1,6 1,10 1,8 1,0 1,-4 1,-5 1,-3 1,-4 1,-7 1,-4 1,16 1,32 1,20 1,-7 1,-17 1,-9 1,-1 1,-6 1,-5 1,4 1,5 1,2 1,1 1,6 1,16 1,17 1,-3 1,-26 1,-28 1,-15 1,2 1,11 1,-1 1,-11 1,2 1,23 1,25 1,14 1,1 1,-19 1,-20 1,-2 1,3 1,4 1,6 1,-4 1,-11 1,-11 1,2 1,13 1,8 1,-1 1,-3 1,2 1,11 1,7 1,-9 1,-12 1,-9 1,-17 1,-14 1,4 1,9 1,11 1,4 1,-2 1,0 1,-3 1,-6 1,-2 1,2 1,3 1,1 1,2 1,-2 1,-11 1,-15 1,-6 1,11 1,12 1,-2 1,-17 1,-22 1,-13 1,1 1,5 1,6 1,10 1,12 1,14 1,15 1,12 1,6 1,-5 1,-9 1,-1 1,3 1,-2 1,0 1,-3 1,-11 1,-14 1,-9 1,5 1,15 1,14 1,7 1,-2 1,-9 1,-13 1,0 1,17 1,14 1,2 1,-17 1,-25 1,-9 1,9 1,21 1,19 1,8 1,5 1,-7 1,-23 1,-17 1,-1 1,5 1,7 1,5 1,4 1,6 1,0 1,-5 1,-1 1,-1 1,1 1,5 1,-7 1,-18 1,-12 1,0 1,13 1,16 1,8 1,5 1,4 1,4 1,6 1,-2 1,-7 1,-12 1,-1 1,15 1,13 1,-6 1,-9 1,-3 1,-2 1,0 1,2 1,-5 1,-3 1,13 1,16 1,5 1,-4 1,-8 1,-6 1,1 1,9 1,16 1,11 1,2 1,-1 1,-3 1,0 1,5 1,3 1,-7 1,-6 1,3 1,-3 1,-14 1,-5 1,9 1,7 1,-1 1,0 1,-1 1,-2 1,-6 1,-2 1,-5 1,-7 1,4 1,3 1,0 1,6 1,-2 1,-12 1,-3 1,10 1,5 1,-3 1,-5 1,-5 1,1 1,5 1,0 1,-3 1,-2 1,-10 1,-23 1,-23 1,-5 1,15 1,21 1,10 1,0 1,1 1,4 1,5 1,0 1,-5 1,-15 1,-17 1,-5 1,4 1,14 1,13 1,-4 1,-5 1,-1 1,-3 1,4 1,4 1,0 1,-1 1,5 1,11 1,10 1,0 1,-6 1,-8 1,-17 1,-14 1,4 1,16 1,15 1,6 1,-3 1,-7 1,-4 1,1 1,-3 1,-10 1,-11 1,-11 1,0 1,10 1,15 1,25 1,17 1,0 1,-6 1,-4 1,-8 1,-3 1,3 1,4 1,-1 1,-8 1,-5 1,2 1,3 1,-1 1,-6 1,-4 1,3 1,21 1,26 1,10 1,-6 1,-20 1,-17 1,2 1,7 1,4 1,5 1,1 1,-1 1,-3 1,-2 1,-1 1,1 1,-3 1,-11 1,-13 1,-3 1,13 1,25 1,17 1,4 1,-3 1,-14 1,-16 1,-6 1,11 1,15 1,4 1,-8 1,-12 1,-10 1,1 1,7 1,10 1,14 1,6 1,-10 1,-9 1,-8 1,-14 1,-6 1,8 1,6 1,1 1,-4 1,-1 1,12 1,8 1,-5 1,-3 1,0 1,-2 1,-2 1,-8 1,-10 1,-4 1,8 1,10 1,2 1,3 1,7 1,7 1,-2 1,-14 1,-10 1,1 1,6 1,4 1,-5 1,-4 1,-2 1,-5 1,-9 1,-1 1,0 1,-2 1,4 1,-1 1,-10 1,2 1,10 1,-2 1,-8 1,2 1,11 1,9 1,9 1,8 1,2 1,-4 1,-5 1,2 1,1 1,-13 1,-19 1,-5 1,9 1,9 1,9 1,2 1,-3 1,-5 1,-5 1,1 1,2 1,0 1,2 1,6 1,13 1,11 1,2 1,-6 1,-17 1,-9 1,-3 1,1 1,15 1,17 1,5 1,-4 1,-7 1,-5 1,4 1,8 1,1 1,6 1,6 1,0 1,8 1,14 1,-1 1,-11 1,-13 1,-11 1,-5 1,-1 1,4 1,11 1,5 1,-6 1,-4 1,3 1,2 1,-1 1,-7 1,-10 1,-1 1,7 1,6 1,4 1,-1 1,-3 1,-5 1,-11 1,-3 1,6 1,1 1,-4 1,-5 1,4 1,1 1,-9 1,-7 1,0 1,1 1,2 1,-1 1,-2 1,-9 1,-19 1,-6 1,11 1,14 1,18 1,16 1,12 1,10 1,9 1,10 1,10 1,10 1,38 1,36 1,31 1,25 1,25 1,16 1,18 1,18 1,18 1,14 1,11 1,12 1,10 1,10 1,11 1,0 1,-9 1,-9 1,-10 1,-7 1,-10 1,-14 1,-14 1,-16 1,-15 1,-14 1,-9 1,-4 1,-4 1,-6 1,-4 1,-5 1,-6 1,-4 1,-4 1,-17 1,-24 1,-23 1,-19 1,-10 1,-9 1,-9 1,-9 1,-10 1,-19 1,-20 1,-23 1,-24 1,-21 1,-9 1,-5 1,-9 1,-12 1,-5 1,2 1,7 1,1 1,1 1,3 1,-6 1,-12 1,-7 1,6 1,20 1,11 1,-6 1,-5 1,0 1,-2 1,-3 1,-3 1,2 1,1 1,-1 1,8 1,14 1,2 1,-16 1,-15 1,-3 1,5 1,5 1,-1 1,0 1,4 1,6 1,4 1,-6 1,-16 1,-13 1,4 1,7 1,3 1,6 1,8 1,3 1,4 1,-1 1,-6 1,-7 1,-9 1,-10 1,-7 1,2 1,13 1,13 1,3 1,-5 1,-12 1,-9 1,1 1,7 1,9 1,9 1,7 1,4 1,1 1,-2 1,-3 1,-4 1,-6 1,-8 1,-7 1,4 1,11 1,-3 1,-5 1,6 1,2 1,-3 1,10 1,15 1,4 1,-10 1,-16 1,-11 1,-5 1,5 1,8 1,9 1,2 1,0 1,7 1,3 1,4 1,5 1,0 1,1 1,6 1,4 1,-1 1,1 1,4 1,-2 1,-5 1,-2 1,-4 1,-3 1,4 1,10 1,5 1,-4 1,3 1,-2 1,-6 1,0 1,2 1,7 1,7 1,3 1,0 1,-4 1,-4 1,-3 1,1 1,-7 1,-18 1,-18 1,-12 1,8 1,20 1,12 1,6 1,2 1,-2 1,-2 1,-6 1,-8 1,-2 1,4 1,6 1,14 1,18 1,8 1,-10 1,-11 1,-1 1,-4 1,-12 1,-9 1,1 1,6 1,4 1,-5 1,-2 1,7 1,6 1,-4 1,-13 1,-9 1,2 1,10 1,5 1,3 1,5 1,-3 1,-10 1,-7 1,5 1,10 1,-1 1,-9 1,-3 1,10 1,12 1,5 1,2 1,-6 1,-13 1,-8 1,3 1,13 1,10 1,1 1,4 1,9 1,1 1,-9 1,-4 1,3 1,-2 1,-1 1,3 1,-5 1,-13 1,-8 1,-1 1,2 1,8 1,7 1,-1 1,0 1,-5 1,-10 1,-6 1,1 1,4 1,-1 1,-6 1,0 1,8 1,10 1,5 1,-5 1,-8 1,-4 1,-4 1,-1 1,5 1,2 1,-2 1,-12 1,-16 1,-8 1,-1 1,12 1,12 1,5 1,12 1,11 1,-1 1,-12 1,-10 1,-1 1,0 1,-8 1,-6 1,6 1,8 1,5 1,11 1,11 1,-6 1,-20 1,-8 1,-2 1,-12 1,-8 1,-2 1,0 1,7 1,8 1,-1 1,-6 1,-11 1,-5 1,3 1,14 1,17 1,4 1,-8 1,-5 1,2 1,2 1,3 1,0 1,-1 1,0 1,-13 1,-18 1,-5 1,4 1,-3 1,-4 1,8 1,8 1,7 1,12 1,7 1,-7 1,0 1,15 1,16 1,9 1,-2 1,-15 1,-14 1,-6 1,-5 1,-2 1,2 1,-2 1,-3 1,4 1,9 1,4 1,-3 1,-7 1,-5 1,-1 1,6 1,3 1,-13 1,-16 1,-5 1,11 1,18 1,19 1,11 1,0 1,-9 1,-8 1,-6 1,0 1,6 1,8 1,8 1,2 1,-11 1,-17 1,-13 1,-4 1,3 1,6 1,4 1,2 1,7 1,10 1,10 1,6 1,-5 1,-14 1,-7 1,-2 1,4 1,9 1,-6 1,-15 1,-8 1,-11 1,-17 1,-11 1,-2 1,14 1,25 1,16 1,5 1,-1 1,-5 1,-4 1,1 1,1 1,-5 1,-10 1,-1 1,9 1,10 1,6 1,-3 1,-15 1,-17 1,-17 1,-12 1,-4 1,1 1,7 1,9 1,5 1,9 1,6 1,-3 1,-5 1,-3 1,3 1,8 1,3 1,3 1,3 1,-3 1,-4 1,-2 1,0 1,4 1,4 1,-1 1,-5 1,-1 1,4 1,-1 1,-3 1,-2 1,-5 1,-1 1,0 1,-1 1,8 1,7 1,-5 1,-1 1,8 1,3 1,-4 1,-12 1,-13 1,-3 1,7 1,14 1,16 1,9 1,-5 1,-13 1,-8 1,1 1,4 1,2 1,-2 1,-7 1,-5 1,1 1,0 1,3 1,6 1,-1 1,4 1,10 1,2 1,0 1,4 1,4 1,6 1,3 1,-2 1,2 1,0 1,-1 1,4 1,3 1,-3 1,-6 1,-5 1,-5 1,-11 1,-17 1,-11 1,9 1,19 1,5 1,-1 1,4 1,5 1,4 1,8 1,11 1,9 1,2 1,-7 1,-3 1,-1 1,-9 1,-9 1,-6 1,-13 1,-11 1,5 1,13 1,8 1,8 1,5 1,2 1,-2 1,-13 1,-12 1,1 1,9 1,6 1,2 1,-5 1,-6 1,2 1,5 1,2 1,-2 1,-8 1,-11 1,-2 1,11 1,6 1,-1 1,12 1,17 1,4 1,-10 1,-17 1,-7 1,1 1,4 1,7 1,6 1,2 1,-2 1,-3 1,-3 1,-2 1,1 1,-4 1,-15 1,-16 1,-8 1,-1 1,4 1,11 1,7 1,2 1,7 1,3 1,1 1,-4 1,-10 1,-2 1,16 1,15 1,1 1,-2 1,5 1,6 1,1 1,-8 1,-9 1,-4 1,-1 1,1 1,7 1,10 1,4 1,0 1,-4 1,0 1,1 1,-2 1,-3 1,-5 1,1 1,4 1,-1 1,-3 1,6 1,14 1,7 1,1 1,2 1,7 1,1 1,-6 1,-3 1,7 1,12 1,10 1,10 1,1 1,-11 1,-11 1,-8 1,-7 1,-9 1,-8 1,8 1,15 1,7 1,-1 1,0 1,6 1,0 1,-9 1,-7 1,-1 1,8 1,3 1,-12 1,-9 1,4 1,9 1,8 1,-5 1,-16 1,-7 1,6 1,10 1,8 1,-1 1,-6 1,-5 1,1 1,1 1,-2 1,-3 1,-3 1,0 1,-1 1,2 1,5 1,2 1,-3 1,1 1,3 1,2 1,-4 1,-15 1,-13 1,6 1,24 1,16 1,-10 1,-18 1,-10 1,-2 1,10 1,21 1,14 1,-6 1,-16 1,-7 1,8 1,9 1,-7 1,-17 1,-11 1,-6 1,1 1,6 1,7 1,-3 1,-8 1,3 1,4 1,0 1,9 1,8 1,-6 1,-9 1,-2 1,-5 1,-12 1,-7 1,7 1,11 1,5 1,3 1,3 1,1 1,3 1,-8 1,-6 1,6 1,9 1,1 1,-6 1,-6 1,-5 1,-4 1,1 1,16 1,12 1,-6 1,-12 1,-15 1,-17 1,-10 1,4 1,12 1,8 1,11 1,14 1,4 1,-6 1,-9 1,-12 1,-5 1,1 1,5 1,16 1,18 1,4 1,-9 1,-17 1,-18 1,6 1,21 1,12 1,2 1,-6 1,-13 1,-8 1,2 1,7 1,9 1,13 1,17 1,10 1,-10 1,-25 1,-26 1,-13 1,11 1,22 1,19 1,-1 1,-20 1,-15 1,4 1,18 1,17 1,6 1,-3 1,-2 1,8 1,0 1,-15 1,-10 1,-3 1,2 1,11 1,7 1,-7 1,-11 1,-5 1,-7 1,-3 1,9 1,4 1,-6 1,-2 1,9 1,3 1,-9 1,-6 1,-1 1,2 1,10 1,1 1,-5 1,-4 1,3 1,22 1,15 1,-1 1,-2 1,0 1,5 1,3 1,-9 1,-11 1,-3 1,6 1,1 1,-12 1,-14 1,-6 1,-3 1,-4 1,-3 1,-1 1,0 1,-6 1,-4 1,14 1,16 1,6 1,-8 1,-18 1,-14 1,-7 1,4 1,16 1,16 1,6 1,0 1,0 1,-1 1,-3 1,-5 1,-3 1,4 1,0 1,-6 1,-9 1,-5 1,-2 1,2 1,4 1,-7 1,-9 1,-6 1,0 1,11 1,11 1,13 1,13 1,2 1,-5 1,-2 1,-3 1,-11 1,-8 1,6 1,7 1,-2 1,-3 1,4 1,5 1,-1 1,-7 1,-8 1,-5 1,2 1,15 1,9 1,-12 1,-12 1,-1 1,9 1,9 1,0 1,-4 1,4 1,18 1,18 1,6 1,-4 1,-5 1,-8 1,-18 1,-23 1,-12 1,7 1,15 1,14 1,6 1,-5 1,2 1,9 1,-2 1,-12 1,-7 1,8 1,10 1,-4 1,-4 1,4 1,-3 1,-7 1,-1 1,-3 1,-9 1,-1 1,7 1,2 1,3 1,9 1,15 1,13 1,7 1,1 1,-2 1,2 1,2 1,-2 1,-14 1,-18 1,-6 1,14 1,18 1,9 1,3 1,0 1,-7 1,-7 1,-2 1,-2 1,-4 1,5 1,5 1,4 1,5 1,-9 1,-23 1,-14 1,7 1,8 1,1 1,7 1,6 1,-1 1,7 1,19 1,11 1,2 1,-21 1,-33 1,9 1,19 1,-8 1,-13 1,-2 1,10 1,14 1,-5 1,-12 1,16 1,31 1,20 1,5 1,0 1,-3 1,-4 1,-7 1,-9 1,4 1,10 1,-1 1,-24 1,-20 1,5 1,14 1,15 1,14 1,0 1,-5 1,-2 1,12 1,27 1,18 1,10 1,-21 1,-29 1,-5 1,-2 1,-12 1,-29 1,-23 1,-8 1,-23 1,-29 1,-24 1,-5 1,28 1,28 1,13 1,8 1,14 1,15 1,-16 1,-20 1,7 1,3 1,0 1,0 1,-13 1,-2 1,24 1,17 1,-16 1,-20 1,8 1,7 1,2 1,6 1,13 1,27 1,13 1,-21 1,-29 1,-26 1,-22 1,-10 1,-3 1,16 1,32 1,14 1,-3 1,-3 1,-12 1,-12 1,6 1,10 1,5 1,11 1,12 1,-10 1,-24 1,-25 1,-17 1,7 1,22 1,14 1,0 1,-11 1,-8 1,0 1,3 1,-2 1,3 1,10 1,4 1,-12 1,-12 1,0 1,2 1,4 1,3 1,-3 1,-1 1,1 1,5 1,6 1,6 1,5 1,-5 1,-14 1,-10 1,3 1,12 1,4 1,-2 1,4 1,10 1,8 1,-3 1,-11 1,-11 1,0 1,6 1,1 1,6 1,5 1,-9 1,-5 1,2 1,3 1,5 1,-3 1,-12 1,-8 1,-8 1,-5 1,5 1,10 1,5 1,3 1,0 1,1 1,8 1,5 1,-6 1,-4 1,-2 1,-6 1,1 1,0 1,-7 1,-4 1,-3 1,1 1,7 1,16 1,20 1,4 1,-9 1,-9 1,-4 1,9 1,13 1,1 1,-5 1,-9 1,-11 1,-5 1,1 1,5 1,5 1,3 1,5 1,5 1,-3 1,-9 1,-3 1,0 1,-6 1,-2 1,7 1,5 1,2 1,4 1,4 1,0 1,-7 1,-11 1,-5 1,5 1,3 1,5 1,5 1,-7 1,-1 1,18 1,14 1,-6 1,-19 1,-22 1,-11 1,4 1,14 1,19 1,3 1,-11 1,-8 1,-1 1,2 1,-5 1,-5 1,2 1,6 1,10 1,11 1,5 1,4 1,-3 1,-14 1,-16 1,-18 1,-10 1,2 1,9 1,11 1,15 1,16 1,8 1,-4 1,-16 1,-25 1,-10 1,7 1,8 1,-6 1,-11 1,8 1,18 1,10 1,4 1,0 1,-2 1,3 1,5 1,2 1,-2 1,-11 1,-8 1,1 1,-1 1,-3 1,-5 1,-3 1,5 1,7 1,3 1,4 1,0 1,-2 1,5 1,13 1,4 1,-11 1,-14 1,-10 1,-2 1,9 1,6 1,2 1,-4 1,-15 1,-11 1,0 1,3 1,-1 1,-2 1,4 1,11 1,3 1,-7 1,-3 1,-4 1,-6 1,2 1,7 1,2 1,-5 1,-1 1,-2 1,-10 1,2 1,22 1,20 1,12 1,6 1,-1 1,-4 1,-5 1,1 1,2 1,-9 1,-20 1,-25 1,-15 1,9 1,22 1,18 1,7 1,-8 1,-21 1,-16 1,5 1,20 1,17 1,12 1,6 1,-4 1,-1 1,4 1,1 1,0 1,-1 1,-1 1,-4 1,-12 1,-12 1,-8 1,-2 1,2 1,-1 1,1 1,6 1,4 1,-8 1,-18 1,-9 1,2 1,-3 1,-4 1,-1 1,2 1,11 1,8 1,-1 1,2 1,4 1,2 1,8 1,9 1,-1 1,1 1,4 1,-10 1,-15 1,-14 1,-5 1,12 1,16 1,6 1,-3 1,-4 1,-10 1,-16 1,-8 1,1 1,7 1,9 1,1 1,-5 1,-6 1,-8 1,-7 1,-2 1,7 1,7 1,4 1,10 1,11 1,0 1,-14 1,-18 1,-9 1,1 1,5 1,7 1,4 1,-5 1,-7 1,-1 1,4 1,0 1,-6 1,-1 1,10 1,10 1,-2 1,-8 1,-4 1,-12 1,-13 1,-4 1,-1 1,2 1,8 1,12 1,13 1,15 1,13 1,8 1,-5 1,-21 1,-13 1,-1 1,2 1,7 1,10 1,9 1,-4 1,-16 1,-11 1,5 1,17 1,15 1,1 1,-13 1,-10 1,2 1,0 1,-1 1,9 1,6 1,-6 1,-6 1,1 1,7 1,3 1,-15 1,-18 1,6 1,18 1,11 1,-2 1,-9 1,-5 1,2 1,6 1,-1 1,-11 1,-10 1,7 1,17 1,18 1,17 1,11 1,4 1,-4 1,-2 1,-1 1,-6 1,-5" fill="none" stroke="#80ff00" stroke-width="1.1" vector-effect="non-scaling-stroke" stroke-linejoin="round"/>
<line x1="116" x2="2476" y1="1146.8" y2="1146.8" stroke="#80ff00" stroke-width="2.5" stroke-dasharray="17 7"/>
<path transform="translate(116,0) scale(0.75,0.5)" d="M0,2779 l1,-7 1,15 1,22 1,11 1,-1 1,-6 1,-10 1,-12 1,-9 1,-8 1,4 1,22 1,18 1,2 1,-6 1,-13 1,-13 1,-4 1,10 1,13 1,4 1,-2 1,0 1,0 1,-9 1,-12 1,-9 1,-3 1,3 1,-2 1,-9 1,-8 1,4 1,14 1,17 1,7 1,-2 1,-4 1,-1 1,4 1,-3 1,-2 1,11 1,8 1,-2 1,0 1,-4 1,-14 1,-9 1,-1 1,-1 1,0 1,3 1,0 1,0 1,-6 1,-9 1,5 1,17 1,13 1,2 1,-7 1,-10 1,-2 1,3 1,1 1,-1 1,-7 1,-6 1,1 1,-3 1,-10 1,-2 1,8 1,12 1,9 1,2 1,5 1,0 1,-10 1,-14 1,-7 1,1 1,2 1,4 1,4 1,-1 1,-2 1,-2 1,14 1,18 1,4 1,1 1,1 1,-6 1,-11 1,-18 1,-20 1,-6 1,5 1,7 1,7 1,5 1,7 1,9 1,-1 1,-12 1,-16 1,-13 1,5 1,17 1,11 1,10 1,9 1,1 1,-11 1,-10 1,-1 1,5 1,6 1,4 1,1 1,0 1,-6 1,-7 1,-2 1,-3 1,-7 1,-4 1,5 1,12 1,13 1,5 1,-1 1,10 1,16 1,8 1,-3 1,-11 1,-20 1,-13 1,1 1,7 1,11 1,8 1,-2 1,-2 1,4 1,1 1,-3 1,-7 1,-9 1,-5 1,-4 1,-8 1,-11 1,4 1,11 1,2 1,-4 1,-2 1,8 1,9 1,3 1,-5 1,-5 1,4 1,2 1,1 1,6 1,0 1,-7 1,-4 1,3 1,3 1,1 1,14 1,23 1,12 1,-7 1,-21 1,-19 1,-11 1,-9 1,-3 1,12 1,18 1,10 1,-1 1,-10 1,-5 1,6 1,1 1,-3 1,3 1,3 1,3 1,6 1,4 1,-1 1,-6 1,-5 1,2 1,-3 1,-8 1,-1 1,1 1,1 1,6 1,5 1,1 1,-4 1,-7 1,-1 1,8 1,0 1,-11 1,-16 1,-12 1,-2 1,5 1,1 1,0 1,10 1,12 1,6 1,2 1,6 1,7 1,4 1,-1 1,-8 1,-1 1,13 1,6 1,-8 1,-16 1,-11 1,3 1,5 1,-3 1,-1 1,12 1,12 1,2 1,-4 1,-2 1,8 1,10 1,2 1,-8 1,-11 1,-4 1,-4 1,-7 1,-4 1,2 1,5 1,-2 1,-8 1,-5 1,1 1,2 1,6 1,15 1,8 1,-3 1,-9 1,-10 1,-4 1,2 1,1 1,-4 1,-5 1,2 1,7 1,0 1,1 1,9 1,8 1,10 1,11 1,-4 1,-10 1,0 1,10 1,8 1,-6 1,-13 1,-16 1,-11 1,5 1,10 1,6 1,9 1,2 1,-5 1,-6 1,-10 1,-1 1,0 1,-5 1,-5 1,-11 1,-16 1,-5 1,6 1,8 1,12 1,12 1,1 1,1 1,10 1,9 1,2 1,-4 1,-6 1,-7 1,-22 1,-15 1,12 1,13 1,2 1,-6 1,-7 1,-2 1,9 1,5 1,-3 1,-3 1,0 1,0 1,0 1,6 1,11 1,4 1,-1 1,8 1,13 1,2 1,-10 1,-18 1,-15 1,2 1,4 1,-7 1,-8 1,3 1,15 1,15 1,10 1,3 1,-11 1,-13 1,-4 1,1 1,5 1,6 1,0 1,-5 1,-10 1,-6 1,6 1,4 1,-7 1,-16 1,-8 1,8 1,8 1,-4 1,-10 1,-3 1,12 1,10 1,-1 1,3 1,7 1,3 1,5 1,13 1,4 1,-16 1,-23 1,-16 1,-4 1,6 1,9 1,11 1,13 1,0 1,-13 1,-12 1,-8 1,-2 1,13 1,12 1,2 1,2 1,-1 1,-1 1,-1 1,3 1,11 1,11 1,-3 1,-10 1,-6 1,-12 1,-16 1,-10 1,-1 1,7 1,8 1,0 1,-4 1,-4 1,-5 1,-4 1,3 1,8 1,11 1,11 1,1 1,-8 1,-13 1,-19 1,-12 1,5 1,12 1,22 1,23 1,9 1,2 1,-7 1,-21 1,-16 1,-4 1,-1 1,-2 1,-4 1,1 1,6 1,1 1,-3 1,3 1,8 1,7 1,4 1,-3 1,-5 1,2 1,8 1,7 1,-6 1,-14 1,-13 1,-3 1,12 1,15 1,2 1,-11 1,-7 1,7 1,11 1,7 1,2 1,1 1,0 1,-4 1,-7 1,-9 1,-6 1,6 1,17 1,20 1,12 1,-10 1,-16 1,-5 1,0 1,-2 1,3 1,10 1,6 1,-1 1,-4 1,-9 1,-14 1,-17 1,-12 1,6 1,18 1,16 1,6 1,8 1,0 1,-9 1,-9 1,-14 1,-12 1,-2 1,6 1,11 1,10 1,10 1,2 1,0 1,2 1,-2 1,-7 1,-4 1,1 1,6 1,6 1,-4 1,-7 1,5 1,13 1,12 1,7 1,-7 1,-10 1,-3 1,-7 1,-11 1,-4 1,2 1,4 1,-3 1,-8 1,-2 1,5 1,7 1,0 1,-6 1,-8 1,-11 1,-13 1,-14 1,-12 1,-9 1,4 1,19 1,14 1,4 1,1 1,-1 1,-5 1,-8 1,-1 1,0 1,9 1,22 1,13 1,-10 1,-20 1,-15 1,-6 1,5 1,9 1,12 1,5 1,-8 1,-6 1,-9 1,-5 1,13 1,16 1,3 1,-11 1,-15 1,-8 1,-3 1,1 1,3 1,1 1,5 1,8 1,2 1,-2 1,1 1,5 1,4 1,1 1,0 1,1 1,5 1,-3 1,-11 1,-1 1,3 1,3 1,2 1,-6 1,-13 1,-11 1,-5 1,4 1,0 1,-5 1,6 1,14 1,12 1,7 1,1 1,-7 1,-11 1,-6 1,5 1,13 1,6 1,0 1,6 1,7 1,4 1,4 1,5 1,-1 1,-3 1,-3 1,-7 1,1 1,4 1,-2 1,7 1,15 1,-1 1,-15 1,-12 1,-5 1,2 1,4 1,-2 1,-4 1,4 1,5 1,-4 1,-13 1,-20 1,-21 1,-7 1,9 1,19 1,18 1,3 1,-4 1,5 1,3 1,0 1,0 1,-1 1,-2 1,-2 1,3 1,5 1,-6 1,-9 1,-1 1,6 1,1 1,-3 1,-2 1,-1 1,9 1,17 1,9 1,-6 1,-10 1,-6 1,1 1,1 1,-7 1,-10 1,-7 1,2 1,13 1,10 1,9 1,4 1,-7 1,-18 1,-8 1,1 1,-5 1,-5 1,4 1,4 1,0 1,-7 1,-12 1,2 1,19 1,18 1,6 1,-7 1,-12 1,-3 1,3 1,-3 1,-3 1,7 1,17 1,21 1,8 1,-8 1,-17 1,-13 1,0 1,-2 1,-4 1,-2 1,-5 1,-6 1,0 1,8 1,16 1,12 1,-4 1,-12 1,-7 1,-2 1,-1 1,-6 1,-3 1,8 1,12 1,5 1,1 1,4 1,1 1,-8 1,-10 1,-4 1,-1 1,1 1,9 1,12 1,4 1,-2 1,-7 1,-6 1,-8 1,-8 1,2 1,6 1,4 1,7 1,8 1,0 1,-6 1,-8 1,-6 1,8 1,13 1,3 1,5 1,10 1,9 1,5 1,-7 1,-10 1,-3 1,-1 1,-5 1,-8 1,-5 1,-3 1,-3 1,-9 1,-12 1,-4 1,4 1,6 1,6 1,11 1,15 1,2 1,-1 1,10 1,14 1,7 1,-5 1,-12 1,-6 1,-6 1,-4 1,0 1,-6 1,-6 1,-6 1,-1 1,14 1,14 1,1 1,-11 1,-15 1,-5 1,1 1,0 1,-1 1,-8 1,-12 1,-3 1,8 1,20 1,25 1,12 1,-5 1,-12 1,-7 1,1 1,-1 1,-1 1,0 1,-7 1,-5 1,-5 1,1 1,12 1,7 1,2 1,3 1,-3 1,5 1,9 1,2 1,4 1,3 1,-5 1,-7 1,-6 1,-11 1,-13 1,-13 1,2 1,22 1,23 1,6 1,-9 1,-8 1,1 1,4 1,6 1,11 1,11 1,-1 1,-19 1,-19 1,-8 1,-1 1,7 1,10 1,-2 1,-9 1,-7 1,-6 1,-1 1,4 1,-2 1,-7 1,-5 1,-1 1,2 1,5 1,2 1,2 1,1 1,9 1,8 1,-8 1,-13 1,-11 1,-5 1,4 1,11 1,11 1,13 1,8 1,-8 1,-17 1,-14 1,-10 1,-6 1,-1 1,7 1,12 1,2 1,-5 1,2 1,10 1,8 1,2 1,0 1,-6 1,-18 1,-24 1,-13 1,-4 1,1 1,2 1,4 1,15 1,17 1,10 1,-4 1,-16 1,-17 1,-13 1,-7 1,1 1,10 1,14 1,14 1,14 1,5 1,0 1,6 1,-1 1,-12 1,-15 1,-16 1,-8 1,6 1,9 1,7 1,10 1,7 1,-3 1,-12 1,-5 1,9 1,5 1,-5 1,-3 1,-1 1,-2 1,3 1,2 1,2 1,5 1,6 1,3 1,-6 1,-6 1,2 1,9 1,13 1,10 1,6 1,-5 1,-13 1,-7 1,2 1,-2 1,-7 1,-7 1,-8 1,-4 1,8 1,12 1,0 1,-10 1,3 1,8 1,3 1,-2 1,-7 1,-7 1,-4 1,3 1,5 1,4 1,4 1,2 1,2 1,3 1,-2 1,-6 1,-6 1,0 1,8 1,4 1,1 1,5 1,3 1,5 1,7 1,-6 1,-12 1,-7 1,3 1,6 1,0 1,-2 1,9 1,15 1,17 1,6 1,-16 1,-30 1,-25 1,-12 1,-5 1,5 1,17 1,17 1,11 1,9 1,-1 1,-9 1,-4 1,-1 1,-7 1,-1 1,10 1,12 1,7 1,-1 1,-7 1,-8 1,-8 1,-9 1,-14 1,-13 1,-7 1,1 1,16 1,22 1,10 1,-9 1,-16 1,0 1,15 1,8 1,-9 1,-15 1,-7 1,-4 1,-5 1,2 1,10 1,9 1,-6 1,-13 1,0 1,6 1,4 1,7 1,3 1,4 1,5 1,3 1,9 1,10 1,5 1,-7 1,-20 1,-21 1,-11 1,6 1,14 1,8 1,4 1,-1 1,-4 1,-4 1,-13 1,-9 1,0 1,6 1,5 1,-8 1,-13 1,0 1,21 1,27 1,15 1,-6 1,-17 1,-8 1,3 1,1 1,-2 1,2 1,4 1,12 1,11 1,-2 1,-4 1,7 1,4 1,2 1,1 1,-2 1,-6 1,-14 1,-14 1,-6 1,0 1,8 1,6 1,1 1,3 1,3 1,7 1,6 1,6 1,2 1,-12 1,-15 1,-10 1,-1 1,1 1,4 1,6 1,6 1,3 1,-11 1,-18 1,-7 1,1 1,3 1,-2 1,0 1,7 1,7 1,0 1,-7 1,-12 1,-5 1,3 1,9 1,11 1,9 1,6 1,2 1,-5 1,-8 1,-6 1,2 1,8 1,7 1,-3 1,-12 1,-10 1,0 1,5 1,1 1,0 1,3 1,-1 1,-10 1,-4 1,7 1,9 1,0 1,-17 1,-25 1,-8 1,4 1,6 1,9 1,6 1,1 1,3 1,3 1,-2 1,0 1,-1 1,-8 1,-13 1,-8 1,-4 1,-5 1,3 1,9 1,13 1,15 1,10 1,4 1,6 1,8 1,-2 1,-11 1,-6 1,4 1,15 1,10 1,-6 1,-11 1,-5 1,8 1,13 1,11 1,2 1,-11 1,-15 1,-11 1,-9 1,0 1,10 1,14 1,11 1,4 1,0 1,-5 1,-12 1,-2 1,4 1,-13 1,-12 1,8 1,15 1,13 1,9 1,0 1,1 1,1 1,-9 1,-14 1,-13 1,-5 1,6 1,10 1,12 1,1 1,-7 1,6 1,12 1,8 1,-4 1,-17 1,-13 1,7 1,24 1,27 1,13 1,-7 1,-10 1,-8 1,-2 1,0 1,-6 1,-7 1,-2 1,-2 1,-2 1,-5 1,-6 1,-2 1,-1 1,2 1,1 1,-7 1,-2 1,10 1,14 1,8 1,-3 1,-16 1,-12 1,0 1,3 1,6 1,4 1,3 1,5 1,1 1,-3 1,-4 1,-2 1,-2 1,-7 1,-16 1,-12 1,7 1,11 1,6 1,-1 1,-6 1,5 1,20 1,14 1,-3 1,-15 1,-16 1,-11 1,-5 1,0 1,2 1,4 1,9 1,8 1,1 1,3 1,-1 1,-4 1,-5 1,-8 1,-5 1,2 1,5 1,12 1,8 1,-7 1,-9 1,-4 1,-5 1,-7 1,-2 1,-2 1,5 1,9 1,5 1,-1 1,-12 1,-16 1,-8 1,3 1,10 1,11 1,5 1,-2 1,-6 1,1 1,7 1,6 1,2 1,3 1,6 1,7 1,8 1,4 1,-9 1,-19 1,-13 1,4 1,8 1,5 1,-4 1,-20 1,-28 1,-17 1,3 1,15 1,15 1,-1 1,-14 1,-12 1,-2 1,12 1,17 1,9 1,6 1,12 1,9 1,-7 1,-6 1,2 1,4 1,3 1,-8 1,-19 1,-15 1,-5 1,4 1,10 1,8 1,-1 1,-6 1,-9 1,1 1,22 1,17 1,-6 1,-20 1,-19 1,-7 1,11 1,11 1,-2 1,-4 1,-1 1,6 1,6 1,-8 1,-15 1,-12 1,1 1,12 1,9 1,1 1,-2 1,-1 1,3 1,13 1,10 1,0 1,-3 1,-2 1,-1 1,-3 1,-7 1,-7 1,-2 1,7 1,16 1,6 1,-12 1,-6 1,6 1,8 1,7 1,-1 1,-5 1,-3 1,-2 1,5 1,0 1,-8 1,-5 1,-3 1,-5 1,-7 1,-4 1,4 1,8 1,1 1,2 1,6 1,8 1,7 1,3 1,-5 1,-12 1,-10 1,6 1,19 1,16 1,8 1,-3 1,-9 1,-10 1,-2 1,14 1,17 1,7 1,1 1,-2 1,-3 1,4 1,9 1,6 1,-3 1,-13 1,-15 1,-9 1,-7 1,-1 1,2 1,0 1,-2 1,1 1,4 1,3 1,1 1,-4 1,-9 1,-5 1,2 1,8 1,4 1,2 1,2 1,-2 1,-6 1,-2 1,2 1,-5 1,-17 1,-21 1,-10 1,1 1,9 1,13 1,2 1,1 1,0 1,-2 1,-4 1,-10 1,-6 1,10 1,18 1,16 1,7 1,-1 1,1 1,4 1,-2 1,-10 1,-11 1,-5 1,1 1,2 1,3 1,-1 1,-4 1,-1 1,2 1,0 1,-1 1,1 1,1 1,6 1,8 1,1 1,4 1,4 1,1 1,2 1,1 1,2 1,2 1,-6 1,-3 1,4 1,3 1,3 1,0 1,-2 1,3 1,6 1,7 1,6 1,-7 1,-15 1,-5 1,-2 1,-8 1,-5 1,-4 1,-1 1,7 1,4 1,4 1,2 1,0 1,5 1,10 1,10 1,2 1,-4 1,-1 1,-4 1,-1 1,7 1,6 1,1 1,-8 1,-12 1,-7 1,2 1,6 1,10 1,16 1,9 1,1 1,2 1,-3 1,-8 1,-1 1,3 1,8 1,3 1,-2 1,-2 1,-6 1,-9 1,-8 1,-11 1,-8 1,5 1,17 1,7 1,-8 1,-14 1,-13 1,-11 1,-4 1,4 1,7 1,7 1,6 1,-7 1,-9 1,11 1,23 1,16 1,0 1,-13 1,-14 1,-10 1,-2 1,11 1,9 1,5 1,0 1,3 1,4 1,-9 1,-13 1,-3 1,0 1,1 1,0 1,-3 1,-3 1,-1 1,1 1,2 1,-8 1,-16 1,-10 1,4 1,11 1,8 1,6 1,6 1,-2 1,-12 1,-9 1,-5 1,2 1,14 1,20 1,9 1,-9 1,-11 1,-3 1,1 1,0 1,-4 1,-11 1,-11 1,-9 1,-6 1,0 1,-2 1,-5 1,-1 1,1 1,7 1,20 1,11 1,-1 1,1 1,12 1,10 1,-2 1,-5 1,-10 1,-16 1,-5 1,10 1,9 1,6 1,12 1,9 1,10 1,7 1,-3 1,0 1,-3 1,-8 1,-1 1,5 1,7 1,8 1,11 1,7 1,-5 1,-6 1,0 1,-3 1,5 1,6 1,-8 1,-10 1,-8 1,-6 1,0 1,3 1,9 1,5 1,-7 1,-8 1,0 1,3 1,5 1,4 1,-6 1,-12 1,-10 1,-17 1,-15 1,-2 1,6 1,5 1,5 1,2 1,5 1,4 1,-8 1,-7 1,12 1,15 1,10 1,1 1,4 1,20 1,20 1,10 1,8 1,9 1,10 1,12 1,11 1,24 1,24 1,22 1,22 1,24 1,23 1,23 1,21 1,16 1,15 1,17 1,16 1,15 1,15 1,6 1,-16 1,-17 1,-17 1,-6 1,-4 1,-3 1,-4 1,-9 1,-11 1,-13 1,-11 1,-6 1,0 1,-1 1,-4 1,-14 1,-15 1,-14 1,-13 1,-13 1,-14 1,-15 1,-16 1,-15 1,-15 1,-16 1,-14 1,-15 1,-16 1,-16 1,-16 1,-12 1,-7 1,-5 1,4 1,8 1,4 1,-7 1,-11 1,-15 1,-15 1,-22 1,-25 1,-20 1,-12 1,4 1,20 1,21 1,14 1,-2 1,-7 1,-2 1,0 1,-3 1,-4 1,3 1,7 1,-3 1,-9 1,0 1,8 1,10 1,6 1,2 1,-4 1,-12 1,-15 1,-10 1,7 1,15 1,18 1,13 1,-3 1,-18 1,-13 1,1 1,5 1,4 1,3 1,2 1,-1 1,2 1,11 1,8 1,-6 1,-22 1,-22 1,-6 1,8 1,17 1,15 1,3 1,3 1,11 1,13 1,7 1,-5 1,-13 1,-17 1,-9 1,7 1,6 1,-8 1,-12 1,-1 1,15 1,15 1,2 1,-4 1,0 1,1 1,-11 1,-15 1,-7 1,4 1,9 1,7 1,9 1,1 1,-3 1,2 1,2 1,1 1,3 1,6 1,4 1,-1 1,-2 1,0 1,0 1,-6 1,-4 1,4 1,4 1,1 1,-1 1,3 1,10 1,7 1,-4 1,-22 1,-21 1,-3 1,12 1,17 1,8 1,-5 1,0 1,5 1,-3 1,-1 1,3 1,3 1,7 1,1 1,-6 1,-1 1,2 1,-1 1,-1 1,5 1,1 1,-2 1,1 1,-1 1,-6 1,-5 1,-6 1,-3 1,6 1,7 1,6 1,-4 1,-16 1,-7 1,-3 1,1 1,8 1,2 1,-1 1,6 1,4 1,-5 1,-11 1,-17 1,-7 1,18 1,27 1,13 1,-10 1,-19 1,-9 1,6 1,14 1,5 1,-5 1,-2 1,2 1,12 1,7 1,-8 1,-6 1,-3 1,6 1,16 1,14 1,8 1,3 1,-7 1,-7 1,-7 1,-9 1,-6 1,-4 1,3 1,5 1,3 1,3 1,14 1,17 1,-2 1,-8 1,1 1,-3 1,-10 1,-10 1,2 1,6 1,-6 1,-4 1,6 1,9 1,11 1,5 1,1 1,7 1,7 1,3 1,-6 1,-10 1,-10 1,-2 1,9 1,12 1,14 1,-1 1,-15 1,-11 1,-2 1,4 1,9 1,10 1,2 1,-5 1,-1 1,2 1,5 1,8 1,2 1,-1 1,1 1,-2 1,-7 1,-3 1,0 1,-2 1,-3 1,-4 1,-5 1,-5 1,-4 1,-9 1,-7 1,10 1,20 1,17 1,3 1,-12 1,-13 1,2 1,18 1,13 1,5 1,-4 1,-14 1,-10 1,2 1,1 1,-8 1,-5 1,5 1,9 1,10 1,7 1,0 1,0 1,1 1,-2 1,-7 1,-5 1,-5 1,-10 1,-2 1,9 1,3 1,-10 1,-7 1,4 1,10 1,0 1,-2 1,7 1,6 1,-3 1,-5 1,-6 1,1 1,10 1,3 1,-6 1,1 1,4 1,-1 1,-5 1,-12 1,-11 1,4 1,13 1,17 1,9 1,-7 1,-11 1,-6 1,5 1,15 1,14 1,5 1,-5 1,-10 1,-9 1,-4 1,-1 1,-8 1,-10 1,-4 1,-4 1,11 1,21 1,6 1,-5 1,-3 1,-3 1,-2 1,0 1,1 1,0 1,3 1,1 1,-8 1,-8 1,-2 1,-5 1,-2 1,4 1,8 1,3 1,-5 1,-13 1,-11 1,-5 1,10 1,14 1,8 1,2 1,-11 1,-14 1,-5 1,2 1,10 1,14 1,11 1,-1 1,-11 1,-10 1,-8 1,7 1,12 1,2 1,-8 1,-6 1,7 1,17 1,9 1,-12 1,-23 1,-8 1,6 1,4 1,3 1,-2 1,-17 1,-19 1,-3 1,9 1,10 1,4 1,-2 1,-7 1,-8 1,0 1,8 1,13 1,13 1,2 1,-8 1,-6 1,-2 1,-7 1,-8 1,-4 1,3 1,9 1,11 1,5 1,-8 1,-14 1,-3 1,13 1,8 1,-1 1,-7 1,-10 1,-3 1,5 1,2 1,-4 1,-7 1,-3 1,8 1,13 1,14 1,2 1,-6 1,6 1,18 1,8 1,-17 1,-23 1,-13 1,-2 1,5 1,3 1,4 1,0 1,-5 1,1 1,4 1,2 1,1 1,-2 1,-1 1,10 1,15 1,0 1,-7 1,3 1,6 1,8 1,5 1,-8 1,-10 1,-5 1,-10 1,-12 1,-7 1,-8 1,-3 1,9 1,15 1,18 1,16 1,5 1,-8 1,-10 1,-6 1,-2 1,1 1,6 1,4 1,0 1,5 1,14 1,10 1,-6 1,-9 1,-12 1,-19 1,-12 1,1 1,8 1,10 1,6 1,6 1,0 1,-11 1,-1 1,11 1,6 1,5 1,5 1,-5 1,-18 1,-22 1,-18 1,-13 1,-7 1,-3 1,3 1,11 1,6 1,0 1,5 1,4 1,-6 1,-5 1,1 1,4 1,0 1,-6 1,-3 1,4 1,7 1,6 1,2 1,-3 1,-7 1,-7 1,-4 1,0 1,-7 1,-9 1,-2 1,6 1,7 1,0 1,3 1,9 1,10 1,7 1,-4 1,-7 1,-5 1,-3 1,-1 1,-2 1,-10 1,-7 1,5 1,6 1,-6 1,-11 1,-3 1,7 1,5 1,-9 1,-14 1,-6 1,7 1,10 1,7 1,5 1,4 1,3 1,2 1,5 1,13 1,8 1,-8 1,-13 1,-7 1,2 1,6 1,-3 1,-1 1,12 1,10 1,-3 1,-1 1,0 1,-1 1,2 1,-2 1,-1 1,2 1,-4 1,-6 1,2 1,-1 1,0 1,-1 1,-7 1,2 1,6 1,3 1,5 1,2 1,-7 1,-2 1,1 1,-3 1,-1 1,5 1,0 1,-4 1,2 1,5 1,1 1,-4 1,-3 1,5 1,5 1,2 1,4 1,5 1,3 1,1 1,4 1,0 1,-12 1,-18 1,-10 1,3 1,14 1,11 1,-4 1,1 1,6 1,0 1,8 1,5 1,-8 1,-11 1,-8 1,2 1,12 1,11 1,0 1,-2 1,1 1,2 1,3 1,-2 1,-13 1,-6 1,11 1,13 1,6 1,3 1,-3 1,-10 1,-12 1,-6 1,1 1,11 1,3 1,-3 1,3 1,2 1,2 1,4 1,-1 1,0 1,4 1,-9 1,-24 1,-16 1,2 1,11 1,10 1,1 1,-1 1,2 1,5 1,9 1,5 1,1 1,6 1,7 1,7 1,2 1,-8 1,-12 1,-12 1,-5 1,7 1,5 1,-5 1,-10 1,-11 1,-7 1,6 1,14 1,2 1,-2 1,14 1,10 1,-10 1,-9 1,-1 1,9 1,14 1,8 1,-4 1,-10 1,-5 1,-3 1,-10 1,-16 1,-15 1,-8 1,3 1,7 1,-4 1,-11 1,-1 1,13 1,16 1,9 1,2 1,1 1,8 1,11 1,-2 1,-9 1,-12 1,-11 1,-11 1,-3 1,10 1,10 1,-1 1,-7 1,-1 1,2 1,-2 1,-4 1,3 1,4 1,0 1,1 1,4 1,3 1,6 1,14 1,9 1,1 1,3 1,7 1,6 1,-1 1,-6 1,-2 1,1 1,-3 1,-5 1,-6 1,-5 1,-4 1,-9 1,-3 1,10 1,8 1,1 1,6 1,11 1,9 1,5 1,0 1,-12 1,-14 1,-1 1,11 1,15 1,11 1,-2 1,-3 1,-2 1,-5 1,-2 1,-6 1,-11 1,-1 1,9 1,-2 1,-10 1,2 1,14 1,16 1,2 1,-11 1,-8 1,1 1,-1 1,-5 1,-2 1,5 1,1 1,-2 1,-6 1,-4 1,7 1,5 1,-5 1,-7 1,-11 1,-14 1,-1 1,5 1,6 1,8 1,-6 1,-15 1,-8 1,-5 1,-3 1,1 1,4 1,12 1,14 1,1 1,-8 1,-5 1,2 1,-2 1,-9 1,-1 1,11 1,8 1,4 1,-1 1,-7 1,-7 1,-5 1,-3 1,6 1,7 1,-2 1,-1 1,5 1,3 1,-6 1,-16 1,-11 1,2 1,7 1,5 1,4 1,-4 1,-10 1,0 1,5 1,11 1,14 1,2 1,-11 1,-6 1,3 1,6 1,5 1,2 1,1 1,-5 1,-11 1,-6 1,1 1,-4 1,-6 1,2 1,9 1,4 1,-3 1,5 1,17 1,14 1,5 1,6 1,6 1,-3 1,-18 1,-23 1,-11 1,3 1,13 1,13 1,1 1,-4 1,-6 1,-9 1,-6 1,11 1,21 1,10 1,-2 1,-6 1,-5 1,1 1,1 1,-4 1,-5 1,-6 1,0 1,3 1,0 1,0 1,10 1,9 1,4 1,1 1,-3 1,0 1,3 1,6 1,5 1,5 1,3 1,-6 1,-11 1,-15 1,-15 1,-4 1,11 1,13 1,7 1,3 1,1 1,0 1,4 1,-2 1,-8 1,-3 1,1 1,5 1,11 1,12 1,0 1,-11 1,-18 1,-17 1,3 1,17 1,8 1,2 1,5 1,1 1,-6 1,-11 1,-11 1,-13 1,-13 1,-6 1,0 1,8 1,12 1,10 1,4 1,2 1,9 1,4 1,-15 1,-15 1,4 1,20 1,9 1,-11 1,-13 1,-6 1,-6 1,0 1,14 1,16 1,5 1,-5 1,-10 1,-7 1,2 1,4 1,-3 1,-12 1,-17 1,-4 1,7 1,0 1,-11 1,-3 1,8 1,9 1,1 1,-2 1,6 1,12 1,3 1,-8 1,-8 1,-6 1,-2 1,1 1,0 1,0 1,-8 1,-16 1,-1 1,11 1,6 1,-1 1,-2 1,0 1,13 1,17 1,-5 1,-10 1,2 1,-1 1,-2 1,-3 1,-15 1,-18 1,-12 1,-6 1,5 1,14 1,14 1,5 1,-5 1,-8 1,-4 1,-2 1,3 1,8 1,8 1,5 1,5 1,-1 1,-7 1,1 1,5 1,0 1,-4 1,-3 1,-3 1,-11 1,-2 1,11 1,12 1,9 1,2 1,-5 1,3 1,15 1,8 1,-9 1,-22 1,-19 1,2 1,9 1,7 1,8 1,7 1,6 1,5 1,-1 1,-4 1,-9 1,-2 1,9 1,10 1,4 1,1 1,-5 1,-4 1,8 1,10 1,1 1,-6 1,-14 1,-11 1,4 1,10 1,7 1,2 1,0 1,2 1,3 1,1 1,-1 1,1 1,0 1,0 1,-12 1,-17 1,-7 1,-1 1,5 1,13 1,15 1,7 1,-3 1,4 1,13 1,7 1,-4 1,-12 1,-12 1,-18 1,-19 1,1 1,15 1,11 1,2 1,1 1,7 1,0 1,-4 1,3 1,2 1,8 1,9 1,-7 1,-24 1,-25 1,-11 1,-2 1,8 1,16 1,17 1,14 1,13 1,9 1,-5 1,-20 1,-19 1,-2 1,4 1,1 1,3 1,-1 1,-3 1,-4 1,-7 1,-1 1,4 1,11 1,15 1,5 1,-2 1,-3 1,-7 1,-12 1,-8 1,4 1,6 1,2 1,-1 1,1 1,6 1,4 1,-8 1,-8 1,-1 1,7 1,15 1,3 1,-6 1,-5 1,-9 1,-4 1,1 1,-2 1,-3 1,0 1,0 1,-5 1,-9 1,-5 1,7 1,11 1,0 1,-2 1,5 1,8 1,5 1,-6 1,-15 1,-11 1,3 1,6 1,2 1,7 1,9 1,8 1,6 1,8 1,11 1,-2 1,-17 1,-14 1,-7 1,-3 1,-6 1,0 1,8 1,7 1,3 1,0 1,-1 1,-10 1,-12 1,-2 1,4 1,2 1,1 1,3 1,3 1,2 1,5 1,11 1,8 1,-3 1,-5 1,-4 1,1 1,7 1,2 1,-5 1,-1 1,1 1,1 1,6 1,4 1,-3 1,-4 1,-8 1,-6 1,7 1,13 1,6 1,-6 1,-9 1,-5 1,2 1,4 1,12 1,15 1,0 1,-11 1,-9 1,-4 1,0 1,0 1,0 1,6 1,8 1,5 1,2 1,-4 1,-4 1,-3 1,1 1,7 1,7 1,2 1,-4 1,-5 1,-5 1,-4 1,2 1,0 1,-6 1,-4 1,8 1,14 1,2 1,-14 1,-13 1,-5 1,-1 1,4 1,3 1,-1 1,-14 1,-16 1,-9 1,-3 1,3 1,2 1,8 1,11 1,0 1,-9 1,-12 1,-6 1,4 1,5 1,4 1,5 1,6 1,0 1,-12 1,-12 1,-7 1,-1 1,6 1,5 1,1 1,-2 1,2 1,-1 1,-10 1,-8 1,1 1,7 1,9 1,2 1,-5 1,-7 1,-6 1,-5 1,-5 1,1 1,9 1,9 1,10 1,13 1,12 1,3 1,-8 1,-7 1,2 1,4 1,-2 1,-4 1,-1 1,-6 1,-7 1,-4 1,-1 1,4 1,6 1,7 1,10 1,6 1,1 1,-2 1,-10 1,-11 1,4 1,10 1,-2 1,-7 1,-3 1,-4 1,-4 1,-2 1,2 1,6 1,5 1,3 1,-2 1,-5 1,-3 1,-2 1,-3 1,5 1,15 1,12 1,-1 1,-8 1,-9 1,-2 1,7 1,-1 1,-5 1,5 1,10 1,1 1,-9 1,-13 1,-5 1,1 1,-3 1,-3 1,1 1,0 1,-2 1,-6 1,-2 1,3 1,-1 1,5 1,12 1,10 1,9 1,4 1,-3" fill="none" stroke="#ff0000" stroke-width="1.1" vector-effect="non-scaling-stroke" stroke-linejoin="round"/>
<line x1="116" x2="2476" y1="1450.8" y2="1450.8" stroke="#ff0000" stroke-width="2.5" stroke-dasharray="17 7"/>
<rect x="151" y="688" width="274" height="36" rx="60" ry="18" fill="none" stroke="#7c7c7c" stroke-width="0.9"/>
<rect x="151" y="933.7" width="274" height="36.5" rx="60" ry="18.25" fill="none" stroke="#7c7c7c" stroke-width="0.9"/>
<rect x="151" y="1178.4" width="170" height="36.6" rx="60" ry="18.3" fill="none" stroke="#7c7c7c" stroke-width="0.9"/>
<rect x="151" y="1424" width="170" height="36.5" rx="60" ry="18.25" fill="none" stroke="#7c7c7c" stroke-width="0.9"/>
</svg>
<span class="t p" style="left:167.7px;top:695.9px;font-size:20px;color:#ffffff;letter-spacing:0.01px;">AF3 -79.086 : 122.076 (n/a)</span>
<span class="t p" style="left:167.7px;top:941.3px;font-size:20px;color:#ffffff;letter-spacing:0.01px;">AF4 -87.524 : 125.646 (n/a)</span>
<span class="t p" style="left:167.0px;top:1185.7px;font-size:20px;color:#ffffff;letter-spacing:0.17px;">F3 -0.0 : 0.0 (V)</span>
<span class="t p" style="left:167.0px;top:1430.9px;font-size:20px;color:#ffffff;letter-spacing:0.17px;">F4 -0.0 : 0.0 (V)</span>
<div class="a" style="left:2478px;top:132px;width:12px;height:1488px;background:#252628;"></div>
<div class="a" style="left:2484px;top:862px;width:4px;height:4px;background:#8a8a8a;"></div>
<div class="a" style="left:2484px;top:868px;width:4px;height:4px;background:#8a8a8a;"></div>
<div class="a" style="left:2484px;top:874px;width:4px;height:4px;background:#8a8a8a;"></div>
<div class="a" style="left:2484px;top:880px;width:4px;height:4px;background:#8a8a8a;"></div>
<div class="a" style="left:2484px;top:886px;width:4px;height:4px;background:#8a8a8a;"></div>
<div class="a" style="left:2484px;top:892px;width:4px;height:4px;background:#8a8a8a;"></div>
<div class="a" style="left:2490px;top:132px;width:448px;height:1485.5px;background:#18191d;"></div>
<div class="a" style="left:2490px;top:132px;width:2px;height:1485.5px;background:#3a3e45;"></div>
<div class="a" style="left:2936px;top:132px;width:2px;height:1485.5px;background:#3a3e45;"></div>
<div class="a" style="left:2492px;top:132px;width:446px;height:50.5px;background:#2b2e34;"></div>
<div class="a" style="left:2490px;top:182.3px;width:448px;height:105.7px;background:#40444c;"></div>
<span class="t" style="left:2516.2px;top:144.9px;font-size:22px;color:#e9e9e9;letter-spacing:0.88px;">(3) Signals</span>
<svg class="a" style="left:2868px;top:144px" width="64" height="24" viewBox="0 0 64 24"><g fill="none" stroke="#696a68" stroke-width="1.8"><rect x="4" y="4" width="16.5" height="16.5" rx="1"/><rect x="7.5" y="10" width="7.5" height="7.5" rx="1.5"/><path d="M10.5 10V8.5a1.5 1.5 0 0 1 1.5-1.5h4.5a1.5 1.5 0 0 1 1.5 1.5V13a1.5 1.5 0 0 1-1.5 1.5H15"/><rect x="42" y="4" width="16.5" height="16.5" rx="1"/><path d="M45.5 7.5l9.5 9.5M55 7.5l-9.5 9.5" stroke-width="2.8"/></g></svg>
<div class="a" style="left:2490px;top:184px;width:448px;height:63.5px;background:#2b2e34;border:2px solid #474c55;border-radius:9px;"></div>
<span class="t" style="left:2634.5px;top:207.0px;font-size:21px;color:#e9e9e9;letter-spacing:0.54px;">Select all / none</span>
<div class="a" style="left:2490px;top:249.5px;width:448px;height:38.5px;background:#2b2e34;border:2px solid #474c55;border-radius:9px;"></div>
<span class="t" style="left:2504.2px;top:258.0px;font-size:21px;color:#80868f;letter-spacing:0.75px;">(enter signals to filter)</span>
<div class="a" style="left:2492px;top:288px;width:444px;height:34px;background:#383b43;"></div>
<div class="a" style="left:2496px;top:292px;width:52px;height:28px;background:#2b2e34;"></div>
<div class="a" style="left:2552px;top:292px;width:56px;height:28px;background:#2b2e34;"></div>
<div class="a" style="left:2612px;top:292px;width:140px;height:28px;background:#2b2e34;"></div>
<div class="a" style="left:2756px;top:292px;width:76px;height:28px;background:#2b2e34;"></div>
<div class="a" style="left:2836px;top:292px;width:56px;height:28px;background:#2b2e34;"></div>
<div class="a" style="left:2894px;top:292px;width:40px;height:28px;background:#17181c;"></div>
<span class="t" style="left:2499.8px;top:296.7px;font-size:20px;color:#e4e4e4;font-weight:bold;-webkit-text-stroke:0;letter-spacing:0.05px;">Sel</span>
<span class="t" style="left:2555.8px;top:296.7px;font-size:20px;color:#e4e4e4;font-weight:bold;-webkit-text-stroke:0;letter-spacing:0.12px;">CH</span>
<span class="t" style="left:2615.2px;top:296.7px;font-size:20px;color:#e4e4e4;font-weight:bold;-webkit-text-stroke:0;letter-spacing:0.42px;">Filter</span>
<span class="t" style="left:2759.2px;top:296.7px;font-size:20px;color:#e4e4e4;font-weight:bold;-webkit-text-stroke:0;letter-spacing:0.17px;">PDIM</span>
<span class="t" style="left:2840.0px;top:298.1px;font-size:18.36px;color:#e4e4e4;font-weight:bold;-webkit-text-stroke:0;letter-spacing:-0.55px;">SR</span>
<div class="a" style="left:2726px;top:322px;width:22px;height:36px;background:rgba(255,255,255,.075);"></div>
<div class="a" style="left:2726px;top:334px;width:16px;height:12px;background:#c9c9c9;"></div>
<div class="a" style="left:2502px;top:324px;width:34px;height:34px;border:2px solid #c6d0de;background:#2f6db5"></div>
<span class="t" style="left:2558.7px;top:329.4px;font-size:20.5px;color:#eaeaea;letter-spacing:-0.18px;">AF3</span>
<span class="t" style="left:2617.1px;top:329.4px;font-size:20.5px;color:#eaeaea;letter-spacing:1.00px;">None</span>
<span class="t" style="left:2842.5px;top:329.4px;font-size:20.5px;color:#eaeaea;letter-spacing:2.06px;">200</span>
<div class="a" style="left:2492px;top:358px;width:400px;height:36px;background:#1f2126;"></div>
<div class="a" style="left:2726px;top:358px;width:22px;height:36px;background:rgba(255,255,255,.075);"></div>
<div class="a" style="left:2726px;top:370px;width:16px;height:12px;background:#c9c9c9;"></div>
<div class="a" style="left:2502px;top:360px;width:34px;height:34px;border:2px solid #c6d0de;background:#2f6db5"></div>
<span class="t" style="left:2558.7px;top:365.4px;font-size:20.5px;color:#eaeaea;letter-spacing:-0.16px;">AF4</span>
<span class="t" style="left:2617.1px;top:365.4px;font-size:20.5px;color:#eaeaea;letter-spacing:1.00px;">None</span>
<span class="t" style="left:2842.5px;top:365.4px;font-size:20.5px;color:#eaeaea;letter-spacing:2.06px;">200</span>
<div class="a" style="left:2726px;top:394px;width:22px;height:36px;background:rgba(255,255,255,.075);"></div>
<div class="a" style="left:2726px;top:406px;width:16px;height:12px;background:#c9c9c9;"></div>
<div class="a" style="left:2502px;top:396px;width:34px;height:34px;border:2px solid #646a74;background:#1b1d22"></div>
<span class="t" style="left:2557.7px;top:401.4px;font-size:20.5px;color:#eaeaea;letter-spacing:1.25px;">C3</span>
<span class="t" style="left:2617.1px;top:401.4px;font-size:20.5px;color:#eaeaea;letter-spacing:1.00px;">None</span>
<span class="t" style="left:2762.6px;top:401.4px;font-size:20.5px;color:#eaeaea;">V</span>
<span class="t" style="left:2842.5px;top:401.4px;font-size:20.5px;color:#eaeaea;letter-spacing:2.06px;">200</span>
<div class="a" style="left:2492px;top:430px;width:400px;height:36px;background:#1f2126;"></div>
<div class="a" style="left:2726px;top:430px;width:22px;height:36px;background:rgba(255,255,255,.075);"></div>
<div class="a" style="left:2726px;top:442px;width:16px;height:12px;background:#c9c9c9;"></div>
<div class="a" style="left:2502px;top:432px;width:34px;height:34px;border:2px solid #646a74;background:#1b1d22"></div>
<span class="t" style="left:2557.7px;top:437.4px;font-size:20.5px;color:#eaeaea;letter-spacing:1.38px;">C4</span>
<span class="t" style="left:2617.1px;top:437.4px;font-size:20.5px;color:#eaeaea;letter-spacing:1.00px;">None</span>
<span class="t" style="left:2762.6px;top:437.4px;font-size:20.5px;color:#eaeaea;">V</span>
<span class="t" style="left:2842.5px;top:437.4px;font-size:20.5px;color:#eaeaea;letter-spacing:2.06px;">200</span>
<div class="a" style="left:2726px;top:466px;width:22px;height:36px;background:rgba(255,255,255,.075);"></div>
<div class="a" style="left:2726px;top:478px;width:16px;height:12px;background:#c9c9c9;"></div>
<div class="a" style="left:2502px;top:468px;width:34px;height:34px;border:2px solid #c6d0de;background:#2f6db5"></div>
<span class="t" style="left:2557.1px;top:473.4px;font-size:20.5px;color:#eaeaea;letter-spacing:1.23px;">F3</span>
<span class="t" style="left:2617.1px;top:473.4px;font-size:20.5px;color:#eaeaea;letter-spacing:1.00px;">None</span>
<span class="t" style="left:2762.6px;top:473.4px;font-size:20.5px;color:#eaeaea;">V</span>
<span class="t" style="left:2842.5px;top:473.4px;font-size:20.5px;color:#eaeaea;letter-spacing:2.06px;">200</span>
<div class="a" style="left:2492px;top:502px;width:400px;height:36px;background:#2f6db5;"></div>
<div class="a" style="left:2726px;top:502px;width:22px;height:36px;background:rgba(255,255,255,.075);"></div>
<div class="a" style="left:2726px;top:514px;width:16px;height:12px;background:#c9c9c9;"></div>
<div class="a" style="left:2502px;top:504px;width:34px;height:34px;border:2px solid #c6d0de;background:#2f6db5"></div>
<span class="t" style="left:2557.1px;top:509.4px;font-size:20.5px;color:#eaeaea;letter-spacing:1.25px;">F4</span>
<span class="t" style="left:2617.1px;top:509.4px;font-size:20.5px;color:#eaeaea;letter-spacing:1.00px;">None</span>
<span class="t" style="left:2762.6px;top:509.4px;font-size:20.5px;color:#eaeaea;">V</span>
<span class="t" style="left:2842.5px;top:509.4px;font-size:20.5px;color:#eaeaea;letter-spacing:2.06px;">200</span>
<div class="a" style="left:2726px;top:538px;width:22px;height:36px;background:rgba(255,255,255,.075);"></div>
<div class="a" style="left:2726px;top:550px;width:16px;height:12px;background:#c9c9c9;"></div>
<div class="a" style="left:2502px;top:540px;width:34px;height:34px;border:2px solid #646a74;background:#1b1d22"></div>
<span class="t" style="left:2557.7px;top:545.4px;font-size:20.5px;color:#eaeaea;">O1</span>
<span class="t" style="left:2617.1px;top:545.4px;font-size:20.5px;color:#eaeaea;letter-spacing:1.00px;">None</span>
<span class="t" style="left:2762.6px;top:545.4px;font-size:20.5px;color:#eaeaea;">V</span>
<span class="t" style="left:2842.5px;top:545.4px;font-size:20.5px;color:#eaeaea;letter-spacing:2.06px;">200</span>
<div class="a" style="left:2492px;top:574px;width:400px;height:36px;background:#1f2126;"></div>
<div class="a" style="left:2726px;top:574px;width:22px;height:36px;background:rgba(255,255,255,.075);"></div>
<div class="a" style="left:2726px;top:586px;width:16px;height:12px;background:#c9c9c9;"></div>
<div class="a" style="left:2502px;top:576px;width:34px;height:34px;border:2px solid #646a74;background:#1b1d22"></div>
<span class="t" style="left:2557.7px;top:581.4px;font-size:20.5px;color:#eaeaea;letter-spacing:0.62px;">O2</span>
<span class="t" style="left:2617.1px;top:581.4px;font-size:20.5px;color:#eaeaea;letter-spacing:1.00px;">None</span>
<span class="t" style="left:2762.6px;top:581.4px;font-size:20.5px;color:#eaeaea;">V</span>
<span class="t" style="left:2842.5px;top:581.4px;font-size:20.5px;color:#eaeaea;letter-spacing:2.06px;">200</span>
<div class="a" style="left:112px;top:1620px;width:2826px;height:57px;background:#242527;"></div>
<div class="a" style="left:116px;top:1626px;width:493px;height:46.7px;border:2px solid #1f2022;background:#252628;"></div>
<div class="a" style="left:640.2px;top:1626px;width:491.8px;height:46.7px;border:2px solid #1f2022;background:#252628;"></div>
<div class="a" style="left:1164.5px;top:1626px;width:539.5px;height:46.7px;border:2px solid #1f2022;background:#252628;"></div>
<div class="a" style="left:1736.5px;top:1626px;width:489.5px;height:46.7px;border:2px solid #1f2022;background:#252628;"></div>
<div class="a" style="left:2800px;top:1626px;width:88px;height:46.7px;border:2px solid #1f2022;background:#252628;"></div>
<div class="a" style="left:622px;top:1626px;width:2px;height:48px;background:#1a1b1d;"></div>
<div class="a" style="left:624px;top:1627px;width:1.6px;height:47px;background:#2e3035;"></div>
<div class="a" style="left:1146.9px;top:1626px;width:2px;height:48px;background:#1a1b1d;"></div>
<div class="a" style="left:1148.9px;top:1627px;width:1.6px;height:47px;background:#2e3035;"></div>
<div class="a" style="left:1718.3px;top:1626px;width:2px;height:48px;background:#1a1b1d;"></div>
<div class="a" style="left:1720.3px;top:1627px;width:1.6px;height:47px;background:#2e3035;"></div>
<div class="a" style="left:2240.9px;top:1626px;width:2px;height:48px;background:#1a1b1d;"></div>
<div class="a" style="left:2242.9px;top:1627px;width:1.6px;height:47px;background:#2e3035;"></div>
<div class="a" style="left:2765.3px;top:1626px;width:2px;height:48px;background:#1a1b1d;"></div>
<div class="a" style="left:2767.3px;top:1627px;width:1.6px;height:47px;background:#2e3035;"></div>
<div class="a" style="left:2782.7px;top:1626px;width:2px;height:48px;background:#1a1b1d;"></div>
<div class="a" style="left:2784.7px;top:1627px;width:1.6px;height:47px;background:#2e3035;"></div>
<div class="a" style="left:2258.5px;top:1626.7px;width:493.5px;height:46.8px;background:#22262e;border:1.5px solid #3a4452;"></div>
<span class="t" style="left:122.9px;top:1631.2px;font-size:26px;color:#e8e8e8;letter-spacing:0.09px;">EDF: aligned</span>
<span class="t" style="left:647.5px;top:1631.2px;font-size:26px;color:#e8e8e8;letter-spacing:0.30px;">Start time: 22.00.01 date: 17.07.23</span>
<span class="t" style="left:1170.5px;top:1631.2px;font-size:26px;color:#e8e8e8;letter-spacing:0.40px;">Duration: 10:00:30 / 10:00:30 / 1201 epochs</span>
<span class="t" style="left:1743.5px;top:1631.2px;font-size:26px;color:#e8e8e8;letter-spacing:0.43px;">8 signals, 0 annotations</span>
<span class="t" style="left:2265.5px;top:1631.2px;font-size:26px;color:#c5cad3;letter-spacing:0.43px;">Single night</span>
<span class="t" style="left:2808.9px;top:1631.2px;font-size:26px;color:#8b8b8b;letter-spacing:-0.14px;">v1.5.2</span>
</div></div>
<div id="ring"></div>
</body></html>
